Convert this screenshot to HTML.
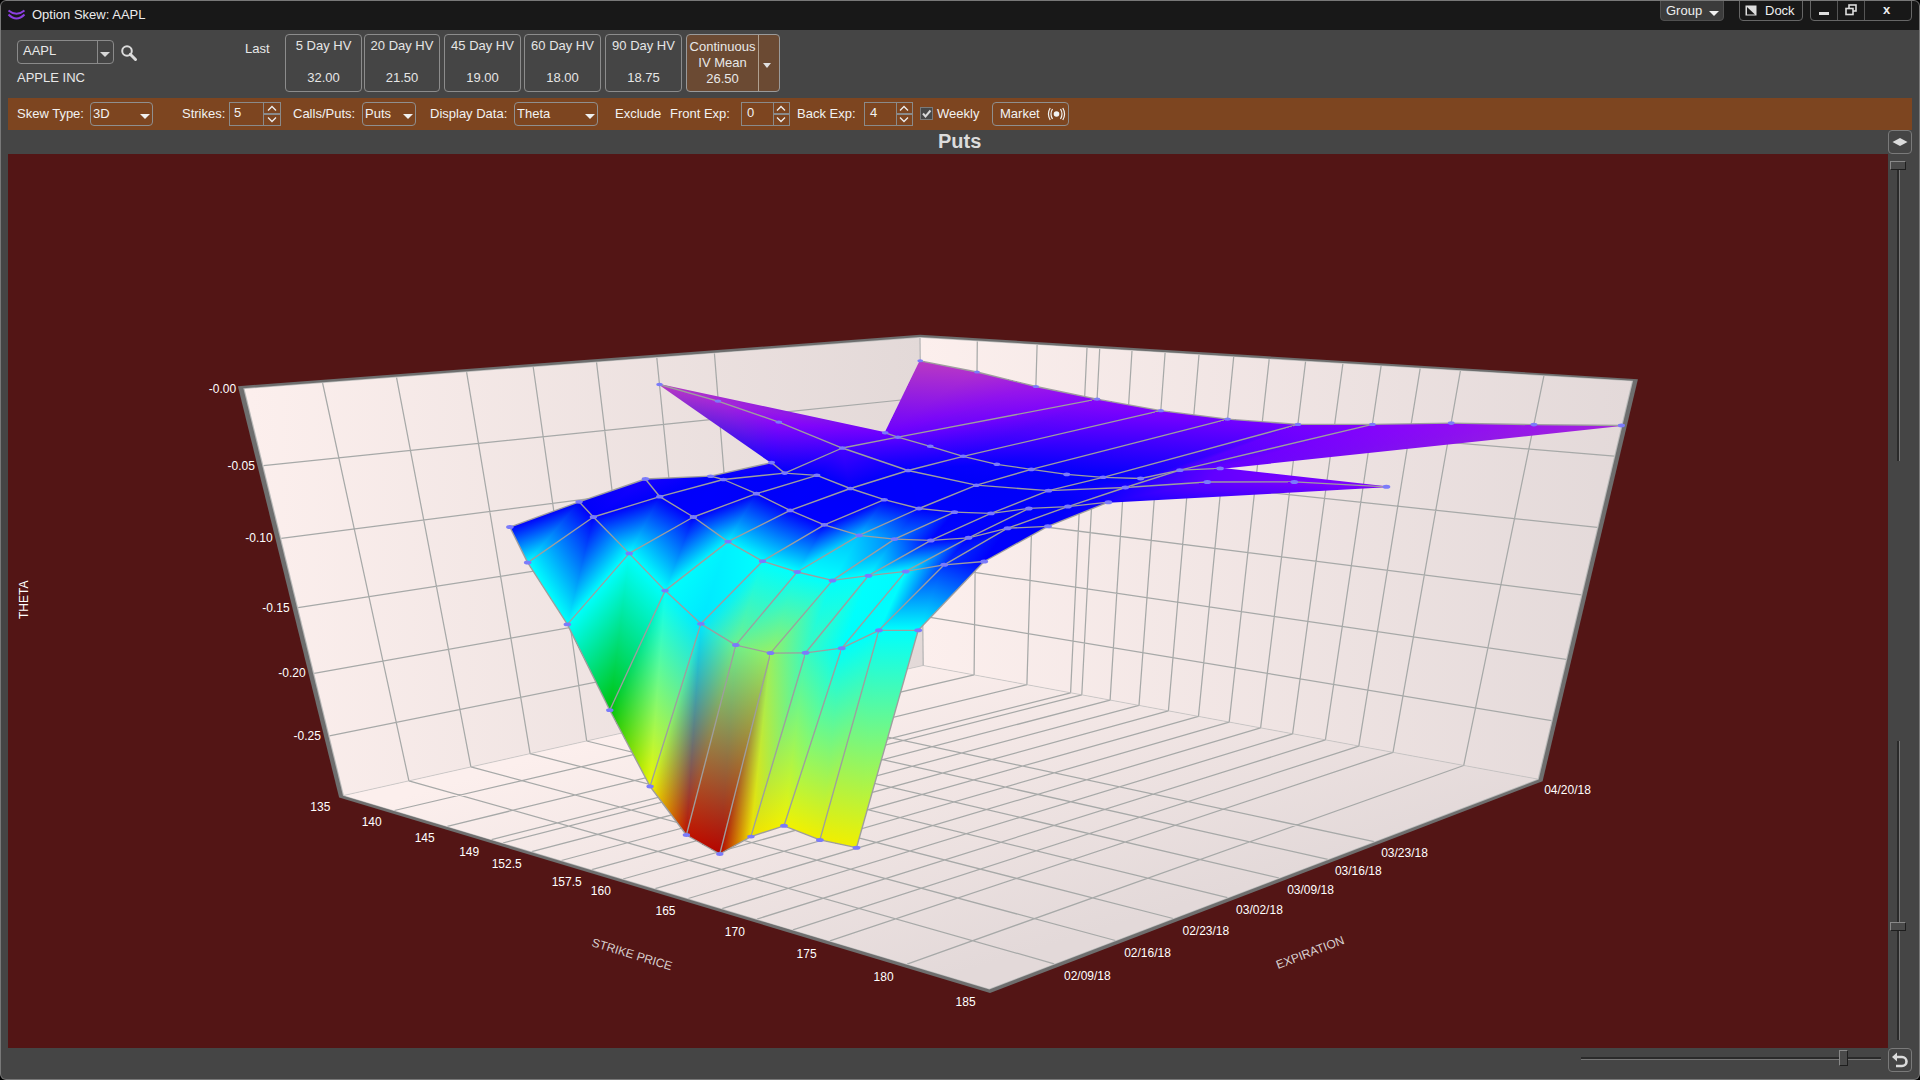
<!DOCTYPE html>
<html><head><meta charset="utf-8">
<style>
*{margin:0;padding:0;box-sizing:border-box}
html,body{width:1920px;height:1080px;overflow:hidden;background:#000}
body{font-family:"Liberation Sans",sans-serif;font-size:13px;color:#e6e6e6;position:relative}
.a{position:absolute}
.t{position:absolute;white-space:nowrap;line-height:1}
#win{position:absolute;left:0;top:0;width:1920px;height:1080px;background:#454545;border-radius:6px;overflow:hidden}
#wb{position:absolute;left:0;top:0;width:1920px;height:1080px;border:1px solid #787878;border-radius:6px}
#title{position:absolute;left:0;top:0;width:1920px;height:30px;background:#181818}
.box{position:absolute;border:1px solid #8a8a8a;border-radius:3px}
.dd{position:absolute;border:1px solid #8f8f8f;border-radius:4px}
.arr{position:absolute;width:0;height:0;border-left:5px solid transparent;border-right:5px solid transparent;border-top:6px solid #f0f0f0}
.hv{position:absolute;top:34px;height:58px;border:1px solid #8c8c8c;border-radius:4px;text-align:center}
.hv .l1{position:absolute;left:0;right:0;top:4px;line-height:13px}
.hv .l2{position:absolute;left:0;right:0;top:36px;line-height:13px}
#orange{position:absolute;left:8px;top:98px;width:1904px;height:32px;background:#7d4520}
.spin{position:absolute;top:102px;height:24px;border:1px solid #8a8a8a}
.chev{position:absolute;width:8px;height:8px;border-left:1.5px solid #eee;border-top:1.5px solid #eee}
</style></head><body>
<div id="win">
 <div id="title">
  <svg class="a" style="left:7px;top:9px" width="19" height="13" viewBox="0 0 19 13"><path d="M1.5 1.5 Q9.5 8 17.5 1.5" stroke="#8b3fe0" stroke-width="2" fill="none"/><path d="M1.5 5.5 Q9.5 13.5 17.5 5.5" stroke="#8b3fe0" stroke-width="2" fill="none"/></svg>
  <div class="t" style="left:32px;top:8px;font-size:13px;color:#ececec">Option Skew: AAPL</div>
  <div class="a" style="left:1660px;top:-3px;width:64px;height:24px;background:#3b3b3b;border:1px solid #505050;border-radius:4px"></div>
  <div class="t" style="left:1666px;top:4px;color:#eee">Group</div>
  <div class="arr" style="left:1709px;top:11px;border-left-width:5px;border-right-width:5px;border-top-width:5px"></div>
  <div class="a" style="left:1739px;top:-3px;width:64px;height:24px;border:1px solid #666;border-radius:4px"></div>
  <svg class="a" style="left:1745px;top:5px" width="12" height="11"><rect x="0.5" y="0.5" width="11" height="10" fill="#ddd"/><path d="M2 2 L10 9.5 L2 9.5 Z" fill="#181818"/></svg>
  <div class="t" style="left:1765px;top:4px;color:#eee">Dock</div>
  <div class="a" style="left:1810px;top:-3px;width:102px;height:24px;border:1px solid #666;border-radius:4px"></div>
  <div class="a" style="left:1837px;top:0;width:1px;height:20px;background:#555"></div>
  <div class="a" style="left:1864px;top:0;width:1px;height:20px;background:#555"></div>
  <div class="a" style="left:1819px;top:12px;width:10px;height:3px;background:#ddd"></div>
  <svg class="a" style="left:1845px;top:4px" width="13" height="12"><rect x="4" y="1" width="7" height="6" fill="none" stroke="#ddd" stroke-width="1.6"/><rect x="1" y="4.5" width="7" height="6" fill="#181818" stroke="#ddd" stroke-width="1.6"/></svg>
  <div class="t" style="left:1883px;top:3px;font-weight:bold;font-size:13px;color:#eee">x</div>
 </div>
 <!-- top panel -->
 <div class="box" style="left:17px;top:40px;width:97px;height:24px;border-radius:4px"></div>
 <div class="a" style="left:97px;top:41px;width:1px;height:22px;background:#8a8a8a"></div>
 <div class="t" style="left:23px;top:44px;color:#e8e8e8">AAPL</div>
 <div class="arr" style="left:100px;top:52px;border-left-width:5px;border-right-width:5px;border-top-width:5px;border-top-color:#d8d8d8"></div>
 <svg class="a" style="left:120px;top:44px" width="18" height="18"><circle cx="7" cy="7" r="4.8" fill="none" stroke="#dcdcdc" stroke-width="2"/><path d="M10.3 10.3 L15.5 15.5" stroke="#dcdcdc" stroke-width="3" stroke-linecap="round"/></svg>
 <div class="t" style="left:17px;top:71px;color:#e8e8e8">APPLE INC</div>
 <div class="t" style="left:245px;top:42px;color:#e8e8e8">Last</div>
 <div class="hv" style="left:285px;width:77px"><div class="l1">5 Day HV</div><div class="l2">32.00</div></div>
 <div class="hv" style="left:364px;width:76px"><div class="l1">20 Day HV</div><div class="l2">21.50</div></div>
 <div class="hv" style="left:444px;width:77px"><div class="l1">45 Day HV</div><div class="l2">19.00</div></div>
 <div class="hv" style="left:524px;width:77px"><div class="l1">60 Day HV</div><div class="l2">18.00</div></div>
 <div class="hv" style="left:605px;width:77px"><div class="l1">90 Day HV</div><div class="l2">18.75</div></div>
 <div class="hv" style="left:686px;width:94px;background:#6b4a33;border-color:#9a9a9a"></div>
 <div class="a" style="left:758px;top:35px;width:1px;height:56px;background:#b0a090"></div>
 <div class="t" style="left:687px;top:39px;width:71px;text-align:center;line-height:16px;color:#e8e8e8">Continuous<br>IV Mean<br>26.50</div>
 <div class="arr" style="left:763px;top:63px;border-left-width:4px;border-right-width:4px;border-top-width:5px;border-top-color:#e0e0e0"></div>
 <!-- orange bar -->
 <div id="orange"></div>
 <div class="t" style="left:17px;top:107px;color:#f2f2f2">Skew Type:</div>
 <div class="dd" style="left:90px;top:102px;width:63px;height:24px"></div>
 <div class="t" style="left:93px;top:107px;color:#f2f2f2">3D</div>
 <div class="arr" style="left:140px;top:114px;border-left-width:5px;border-right-width:5px;border-top-width:5px"></div>
 <div class="t" style="left:182px;top:107px;color:#f2f2f2">Strikes:</div>
 <div class="spin" style="left:229px;width:52px"></div>
 <div class="a" style="left:263px;top:103px;width:1px;height:22px;background:#8a8a8a"></div>
 <div class="a" style="left:264px;top:113px;width:16px;height:2px;background:#8a8a8a"></div>
 <div class="t" style="left:234px;top:106px;color:#f2f2f2">5</div>
 <svg class="a" style="left:265px;top:104px" width="14" height="20"><path d="M3 6.5 L7 2.5 L11 6.5" stroke="#eee" stroke-width="1.3" fill="none"/><path d="M3 13.5 L7 17.5 L11 13.5" stroke="#eee" stroke-width="1.3" fill="none"/></svg>
 <div class="t" style="left:293px;top:107px;color:#f2f2f2">Calls/Puts:</div>
 <div class="dd" style="left:362px;top:102px;width:54px;height:24px"></div>
 <div class="t" style="left:365px;top:107px;color:#f2f2f2">Puts</div>
 <div class="arr" style="left:403px;top:114px;border-left-width:5px;border-right-width:5px;border-top-width:5px"></div>
 <div class="t" style="left:430px;top:107px;color:#f2f2f2">Display Data:</div>
 <div class="dd" style="left:514px;top:102px;width:84px;height:24px"></div>
 <div class="t" style="left:517px;top:107px;color:#f2f2f2">Theta</div>
 <div class="arr" style="left:585px;top:114px;border-left-width:5px;border-right-width:5px;border-top-width:5px"></div>
 <div class="t" style="left:615px;top:107px;color:#f2f2f2">Exclude</div>
 <div class="t" style="left:670px;top:107px;color:#f2f2f2">Front Exp:</div>
 <div class="spin" style="left:741px;width:49px"></div>
 <div class="a" style="left:773px;top:103px;width:1px;height:22px;background:#8a8a8a"></div>
 <div class="a" style="left:774px;top:113px;width:15px;height:2px;background:#8a8a8a"></div>
 <div class="t" style="left:747px;top:106px;color:#f2f2f2">0</div>
 <svg class="a" style="left:774px;top:104px" width="14" height="20"><path d="M3 6.5 L7 2.5 L11 6.5" stroke="#eee" stroke-width="1.3" fill="none"/><path d="M3 13.5 L7 17.5 L11 13.5" stroke="#eee" stroke-width="1.3" fill="none"/></svg>
 <div class="t" style="left:797px;top:107px;color:#f2f2f2">Back Exp:</div>
 <div class="spin" style="left:864px;width:49px"></div>
 <div class="a" style="left:896px;top:103px;width:1px;height:22px;background:#8a8a8a"></div>
 <div class="a" style="left:897px;top:113px;width:15px;height:2px;background:#8a8a8a"></div>
 <div class="t" style="left:870px;top:106px;color:#f2f2f2">4</div>
 <svg class="a" style="left:897px;top:104px" width="14" height="20"><path d="M3 6.5 L7 2.5 L11 6.5" stroke="#eee" stroke-width="1.3" fill="none"/><path d="M3 13.5 L7 17.5 L11 13.5" stroke="#eee" stroke-width="1.3" fill="none"/></svg>
 <div class="a" style="left:920px;top:107px;width:13px;height:13px;background:#474747;border:1px solid #7a7a7a"></div>
 <svg class="a" style="left:921px;top:108px" width="11" height="11"><path d="M2 5.5 L4.5 8.5 L9.5 2.5" stroke="#d8d8d8" stroke-width="2" fill="none"/></svg>
 <div class="t" style="left:937px;top:107px;color:#f2f2f2">Weekly</div>
 <div class="a" style="left:992px;top:102px;width:77px;height:24px;border:1px solid #8f8f8f;border-radius:4px"></div>
 <div class="t" style="left:1000px;top:107px;color:#f2f2f2">Market</div>
 <svg class="a" style="left:1047px;top:107px" width="19" height="14"><circle cx="9.5" cy="7" r="2.8" fill="#f2f2f2"/><path d="M5.5 2 Q2.5 7 5.5 12" stroke="#f2f2f2" stroke-width="1.2" fill="none"/><path d="M3.2 1 Q-0.3 7 3.2 13" stroke="#f2f2f2" stroke-width="1.2" fill="none"/><path d="M13.5 2 Q16.5 7 13.5 12" stroke="#f2f2f2" stroke-width="1.2" fill="none"/><path d="M15.8 1 Q19.3 7 15.8 13" stroke="#f2f2f2" stroke-width="1.2" fill="none"/></svg>
 <!-- chart header -->
 <div class="t" style="left:938px;top:131px;font-size:20px;font-weight:bold;color:#dcdcdc">Puts</div>
 <div class="a" style="left:1888px;top:130px;width:24px;height:24px;border:1px solid #7a7a7a;border-radius:4px"></div>
 <svg class="a" style="left:1891px;top:137px" width="18" height="10"><path d="M1.5 5 L9 1 L16.5 5 L9 9 Z" fill="#dcdcdc"/></svg>
 <!-- right sliders -->
 <div class="a" style="left:1897px;top:168px;width:3px;height:293px;background:#2a2a2a;border-right:1px solid #777"></div>
 <div class="a" style="left:1890px;top:161px;width:16px;height:9px;background:#4a4a4a;border:1px solid #1e1e1e;border-top-color:#888;border-left-color:#888"></div>
 <div class="a" style="left:1897px;top:741px;width:3px;height:299px;background:#2a2a2a;border-right:1px solid #777"></div>
 <div class="a" style="left:1890px;top:922px;width:16px;height:9px;background:#4a4a4a;border:1px solid #1e1e1e;border-top-color:#888;border-left-color:#888"></div>
 <div class="a" style="left:1581px;top:1057px;width:300px;height:3px;background:#2a2a2a;border-bottom:1px solid #777"></div>
 <div class="a" style="left:1839px;top:1050px;width:9px;height:16px;background:#4a4a4a;border:1px solid #1e1e1e;border-top-color:#888;border-left-color:#888"></div>
 <div class="a" style="left:1888px;top:1048px;width:24px;height:24px;border:1px solid #7a7a7a;border-radius:4px"></div>
 <svg class="a" style="left:1891px;top:1051px" width="18" height="18"><path d="M5 6 H11 A4.5 4.5 0 0 1 11 15 H5" stroke="#dcdcdc" stroke-width="2.6" fill="none"/><path d="M1 6 L6 1.5 L6 10.5 Z" fill="#dcdcdc"/></svg>
<svg class="a" style="left:0;top:0" width="1920" height="1080">
<defs>
<clipPath id="cc"><rect x="8" y="154" width="1880" height="894"/></clipPath>
<linearGradient id="gl" gradientUnits="userSpaceOnUse" x1="250" y1="500" x2="922" y2="500"><stop offset="0" stop-color="#fcefed"/><stop offset="1" stop-color="#e3d9d8"/></linearGradient>
<linearGradient id="gr" gradientUnits="userSpaceOnUse" x1="922" y1="500" x2="1632" y2="500"><stop offset="0" stop-color="#fcefed"/><stop offset="1" stop-color="#e3d9d9"/></linearGradient>
<linearGradient id="gf" gradientUnits="userSpaceOnUse" x1="254" y1="842" x2="350" y2="1158"><stop offset="0" stop-color="#fcefed"/><stop offset="1" stop-color="#e3d9d9"/></linearGradient>
</defs>
<rect x="8" y="154" width="1880" height="894" fill="#531515"/>
<g clip-path="url(#cc)">
<polygon points="237.9,386.2 920.1,334.7 1637.9,379.2 1542.6,781.2 990,993 339.1,797.5" fill="#6e6e6e"/>
<polygon points="243.3,388.3 920,337.1 1633.1,380.8 1538.7,779.6 989.4,989.5 343,795.8" fill="#b9bab9"/>
<polygon points="244.6,388.9 920,337.7 923.2,665.5 344,795.4" fill="url(#gl)"/>
<polygon points="920,337.7 1631.9,381.3 1537.7,779.1 923.2,665.5" fill="url(#gr)"/>
<polygon points="344,795.4 923.2,665.5 1537.7,779.1 989.2,988.7" fill="url(#gf)"/>
<clipPath id="wc"><polygon points="244.6,388.9 920,337.7 1631.9,381.3 1537.7,779.1 989.2,988.7 344,795.4"/></clipPath>
<path d="M322.6 383L408.9 780.8M408.9 780.8L1054.2 963.8M396.5 377.4L470.9 766.9M470.9 766.9L1115.4 940.5M466.6 372.1L530.1 753.7M530.1 753.7L1173.1 918.5M533.2 367L586.7 741M586.7 741L1227.5 897.6M596.5 362.2L640.9 728.8M640.9 728.8L1279 878M656.8 357.7L692.9 717.2M692.9 717.2L1327.8 859.3M714.4 353.3L742.7 706M742.7 706L1374.1 841.6M263.4 465.6L920.6 398M920.6 398L1614.2 456.2M281.2 538.4L921.2 455.8M921.2 455.8L1597.3 527.3M298.1 607.6L921.7 511.3M921.7 511.3L1581.3 594.9M314.1 673.3L922.2 564.7M922.2 564.7L1566.1 659.3M329.4 735.8L922.7 616.1M922.7 616.1L1551.6 720.6M977.3 341.2L974.1 674.9M974.1 674.9L394.4 810.5M1037.1 344.9L1026.9 684.7M1026.9 684.7L447.3 826.3M1087 347.9L1070.6 692.8M1070.6 692.8L491.5 839.6M1099.7 348.7L1081.8 694.8M1081.8 694.8L502.9 843M1132 350.7L1110.1 700.1M1110.1 700.1L531.7 851.6M1165.1 352.7L1139 705.4M1139 705.4L561.4 860.5M1199 354.8L1168.4 710.9M1168.4 710.9L591.8 869.6M1233.7 356.9L1198.5 716.4M1198.5 716.4L623.1 879M1269.2 359.1L1229.2 722.1M1229.2 722.1L655.2 888.6M1305.6 361.3L1260.6 727.9M1260.6 727.9L688.2 898.5M1342.9 363.6L1292.6 733.8M1292.6 733.8L722.1 908.6M1381.1 365.9L1325.4 739.9M1325.4 739.9L757 919.1M1420.2 368.3L1358.8 746.1M1358.8 746.1L792.9 929.9M1460.4 370.8L1393 752.4M1393 752.4L829.9 940.9M1543.9 375.9L1463.7 765.5M1463.7 765.5L907.1 964.1" stroke="#a7a9a8" stroke-width="1.25" fill="none" clip-path="url(#wc)"/>
<path d="M920 337.7L923.2 665.5" stroke="#b4b4b4" stroke-width="1.2"/>
<path d="M344 795.4L923.2 665.5L1537.7 779.1" stroke="#b8b8b8" stroke-width="1" fill="none" opacity="0.6"/>
<defs><linearGradient id="q1" gradientUnits="userSpaceOnUse" x1="509.9" y1="527.1" x2="523.5" y2="564.2"><stop offset="0" stop-color="rgb(0,0,0)"/><stop offset="1" stop-color="rgb(0,255,0)"/></linearGradient><linearGradient id="q2" gradientUnits="userSpaceOnUse" x1="579.1" y1="501.8" x2="556.7" y2="571.9"><stop offset="0" stop-color="rgb(0,0,248)"/><stop offset="1" stop-color="rgb(0,0,255)"/></linearGradient><linearGradient id="q3" gradientUnits="userSpaceOnUse" x1="593.4" y1="517" x2="535.9" y2="571.3"><stop offset="0" stop-color="rgb(0,0,0)"/><stop offset="1" stop-color="rgb(0,255,0)"/></linearGradient><linearGradient id="q4" gradientUnits="userSpaceOnUse" x1="579.1" y1="501.8" x2="593" y2="536.2"><stop offset="0" stop-color="rgb(0,0,248)"/><stop offset="1" stop-color="rgb(0,0,255)"/></linearGradient><linearGradient id="q5" gradientUnits="userSpaceOnUse" x1="593.4" y1="517" x2="526.1" y2="560.3"><stop offset="0" stop-color="rgb(0,0,0)"/><stop offset="1" stop-color="rgb(0,255,0)"/></linearGradient><linearGradient id="q6" gradientUnits="userSpaceOnUse" x1="567.4" y1="624.4" x2="511.6" y2="600.9"><stop offset="0" stop-color="rgb(0,0,250)"/><stop offset="1" stop-color="rgb(0,0,255)"/></linearGradient><linearGradient id="q7" gradientUnits="userSpaceOnUse" x1="593.4" y1="517" x2="631.8" y2="550.4"><stop offset="0" stop-color="rgb(0,0,0)"/><stop offset="1" stop-color="rgb(0,255,0)"/></linearGradient><linearGradient id="q8" gradientUnits="userSpaceOnUse" x1="567.4" y1="624.4" x2="621.2" y2="630"><stop offset="0" stop-color="rgb(0,0,250)"/><stop offset="1" stop-color="rgb(0,0,255)"/></linearGradient><linearGradient id="q9" gradientUnits="userSpaceOnUse" x1="609.8" y1="710.2" x2="543.2" y2="652.2"><stop offset="0" stop-color="rgb(0,195,0)"/><stop offset="1" stop-color="rgb(0,255,0)"/></linearGradient><linearGradient id="q10" gradientUnits="userSpaceOnUse" x1="609.8" y1="710.2" x2="542.5" y2="649.3"><stop offset="0" stop-color="rgb(0,0,11)"/><stop offset="1" stop-color="rgb(0,0,255)"/></linearGradient><linearGradient id="q11" gradientUnits="userSpaceOnUse" x1="609.8" y1="710.2" x2="698.2" y2="624.8"><stop offset="0" stop-color="rgb(0,195,0)"/><stop offset="1" stop-color="rgb(0,255,0)"/></linearGradient><linearGradient id="q12" gradientUnits="userSpaceOnUse" x1="609.8" y1="710.2" x2="697.7" y2="620.8"><stop offset="0" stop-color="rgb(0,0,11)"/><stop offset="1" stop-color="rgb(0,0,255)"/></linearGradient><linearGradient id="q13" gradientUnits="userSpaceOnUse" x1="609.8" y1="710.2" x2="672" y2="739"><stop offset="0" stop-color="rgb(0,0,0)"/><stop offset="1" stop-color="rgb(238,0,0)"/></linearGradient><linearGradient id="q14" gradientUnits="userSpaceOnUse" x1="609.8" y1="710.2" x2="661.4" y2="711.7"><stop offset="0" stop-color="rgb(0,195,0)"/><stop offset="1" stop-color="rgb(0,255,0)"/></linearGradient><linearGradient id="q15" gradientUnits="userSpaceOnUse" x1="650.1" y1="786.5" x2="747.8" y2="727.3"><stop offset="0" stop-color="rgb(0,0,0)"/><stop offset="1" stop-color="rgb(0,0,252)"/></linearGradient><linearGradient id="q16" gradientUnits="userSpaceOnUse" x1="700.9" y1="623.8" x2="596.2" y2="736.4"><stop offset="0" stop-color="rgb(0,0,0)"/><stop offset="1" stop-color="rgb(238,0,0)"/></linearGradient><linearGradient id="q17" gradientUnits="userSpaceOnUse" x1="700.9" y1="623.8" x2="660.6" y2="616.8"><stop offset="0" stop-color="rgb(0,232,0)"/><stop offset="1" stop-color="rgb(0,255,0)"/></linearGradient><linearGradient id="q18" gradientUnits="userSpaceOnUse" x1="650.1" y1="786.5" x2="756.5" y2="678.9"><stop offset="0" stop-color="rgb(0,0,0)"/><stop offset="1" stop-color="rgb(0,0,255)"/></linearGradient><linearGradient id="q19" gradientUnits="userSpaceOnUse" x1="700.9" y1="623.8" x2="606.6" y2="655"><stop offset="0" stop-color="rgb(0,0,0)"/><stop offset="1" stop-color="rgb(238,0,0)"/></linearGradient><linearGradient id="q20" gradientUnits="userSpaceOnUse" x1="686.4" y1="835" x2="639.8" y2="821.2"><stop offset="0" stop-color="rgb(0,20,0)"/><stop offset="1" stop-color="rgb(0,244,0)"/></linearGradient><linearGradient id="q21" gradientUnits="userSpaceOnUse" x1="650.1" y1="786.5" x2="760.6" y2="703.6"><stop offset="0" stop-color="rgb(0,0,0)"/><stop offset="1" stop-color="rgb(0,0,255)"/></linearGradient><linearGradient id="q22" gradientUnits="userSpaceOnUse" x1="700.9" y1="623.8" x2="765.8" y2="652"><stop offset="0" stop-color="rgb(0,0,0)"/><stop offset="1" stop-color="rgb(192,0,0)"/></linearGradient><linearGradient id="q23" gradientUnits="userSpaceOnUse" x1="686.4" y1="835" x2="800.8" y2="700.3"><stop offset="0" stop-color="rgb(0,20,0)"/><stop offset="1" stop-color="rgb(0,240,0)"/></linearGradient><linearGradient id="q24" gradientUnits="userSpaceOnUse" x1="686.4" y1="835" x2="607.3" y2="790.6"><stop offset="0" stop-color="rgb(0,0,0)"/><stop offset="1" stop-color="rgb(0,0,255)"/></linearGradient><linearGradient id="q25" gradientUnits="userSpaceOnUse" x1="735.8" y1="645.1" x2="618.5" y2="707.7"><stop offset="0" stop-color="rgb(110,0,0)"/><stop offset="1" stop-color="rgb(192,0,0)"/></linearGradient><linearGradient id="q26" gradientUnits="userSpaceOnUse" x1="719.8" y1="854" x2="750" y2="647.1"><stop offset="0" stop-color="rgb(0,4,0)"/><stop offset="1" stop-color="rgb(0,240,0)"/></linearGradient><linearGradient id="q27" gradientUnits="userSpaceOnUse" x1="686.4" y1="835" x2="780.2" y2="670.4"><stop offset="0" stop-color="rgb(0,0,0)"/><stop offset="1" stop-color="rgb(0,0,140)"/></linearGradient><linearGradient id="q28" gradientUnits="userSpaceOnUse" x1="735.8" y1="645.1" x2="792.7" y2="667.2"><stop offset="0" stop-color="rgb(110,0,0)"/><stop offset="1" stop-color="rgb(179,0,0)"/></linearGradient><linearGradient id="q29" gradientUnits="userSpaceOnUse" x1="719.8" y1="854" x2="766.7" y2="652.2"><stop offset="0" stop-color="rgb(0,4,0)"/><stop offset="1" stop-color="rgb(0,240,0)"/></linearGradient><linearGradient id="q30" gradientUnits="userSpaceOnUse" x1="719.8" y1="854" x2="629.4" y2="785.4"><stop offset="0" stop-color="rgb(0,0,0)"/><stop offset="1" stop-color="rgb(0,0,140)"/></linearGradient><linearGradient id="q31" gradientUnits="userSpaceOnUse" x1="770.5" y1="653.1" x2="805" y2="663.9"><stop offset="0" stop-color="rgb(150,0,0)"/><stop offset="1" stop-color="rgb(240,0,0)"/></linearGradient><linearGradient id="q32" gradientUnits="userSpaceOnUse" x1="719.8" y1="854" x2="750.9" y2="857"><stop offset="0" stop-color="rgb(0,4,0)"/><stop offset="1" stop-color="rgb(0,240,0)"/></linearGradient><linearGradient id="q33" gradientUnits="userSpaceOnUse" x1="719.8" y1="854" x2="646.1" y2="723.1"><stop offset="0" stop-color="rgb(0,0,0)"/><stop offset="1" stop-color="rgb(0,0,100)"/></linearGradient><linearGradient id="q34" gradientUnits="userSpaceOnUse" x1="805.6" y1="652.8" x2="735.8" y2="658.7"><stop offset="0" stop-color="rgb(60,0,0)"/><stop offset="1" stop-color="rgb(240,0,0)"/></linearGradient><linearGradient id="q35" gradientUnits="userSpaceOnUse" x1="750.9" y1="836.6" x2="836" y2="821.2"><stop offset="0" stop-color="rgb(0,225,0)"/><stop offset="1" stop-color="rgb(0,250,0)"/></linearGradient><linearGradient id="q36" gradientUnits="userSpaceOnUse" x1="750.9" y1="836.6" x2="824.2" y2="828.8"><stop offset="0" stop-color="rgb(0,0,0)"/><stop offset="1" stop-color="rgb(0,0,190)"/></linearGradient><linearGradient id="q37" gradientUnits="userSpaceOnUse" x1="805.6" y1="652.8" x2="859.3" y2="797.9"><stop offset="0" stop-color="rgb(60,0,0)"/><stop offset="1" stop-color="rgb(242,0,0)"/></linearGradient><linearGradient id="q38" gradientUnits="userSpaceOnUse" x1="750.9" y1="836.6" x2="798.9" y2="838.3"><stop offset="0" stop-color="rgb(0,225,0)"/><stop offset="1" stop-color="rgb(0,250,0)"/></linearGradient><linearGradient id="q39" gradientUnits="userSpaceOnUse" x1="750.9" y1="836.6" x2="702.2" y2="686.3"><stop offset="0" stop-color="rgb(0,0,0)"/><stop offset="1" stop-color="rgb(0,0,190)"/></linearGradient><linearGradient id="q40" gradientUnits="userSpaceOnUse" x1="841.7" y1="648.2" x2="722.3" y2="714.2"><stop offset="0" stop-color="rgb(0,0,0)"/><stop offset="1" stop-color="rgb(242,0,0)"/></linearGradient><linearGradient id="q41" gradientUnits="userSpaceOnUse" x1="784" y1="825.8" x2="876.2" y2="805.7"><stop offset="0" stop-color="rgb(0,242,0)"/><stop offset="1" stop-color="rgb(0,255,0)"/></linearGradient><linearGradient id="q42" gradientUnits="userSpaceOnUse" x1="784" y1="825.8" x2="904.4" y2="755.8"><stop offset="0" stop-color="rgb(0,0,0)"/><stop offset="1" stop-color="rgb(0,0,250)"/></linearGradient><linearGradient id="q43" gradientUnits="userSpaceOnUse" x1="841.7" y1="648.2" x2="772.6" y2="821.3"><stop offset="0" stop-color="rgb(0,0,0)"/><stop offset="1" stop-color="rgb(242,0,0)"/></linearGradient><linearGradient id="q44" gradientUnits="userSpaceOnUse" x1="819.9" y1="839.9" x2="736.1" y2="725.8"><stop offset="0" stop-color="rgb(0,238,0)"/><stop offset="1" stop-color="rgb(0,255,0)"/></linearGradient><linearGradient id="q45" gradientUnits="userSpaceOnUse" x1="784" y1="825.8" x2="851.8" y2="652.1"><stop offset="0" stop-color="rgb(0,0,0)"/><stop offset="1" stop-color="rgb(0,0,250)"/></linearGradient><linearGradient id="q46" gradientUnits="userSpaceOnUse" x1="878.9" y1="630.3" x2="949.6" y2="777.7"><stop offset="0" stop-color="rgb(0,0,0)"/><stop offset="1" stop-color="rgb(241,0,0)"/></linearGradient><linearGradient id="q47" gradientUnits="userSpaceOnUse" x1="819.9" y1="839.9" x2="749.3" y2="692.5"><stop offset="0" stop-color="rgb(0,238,0)"/><stop offset="1" stop-color="rgb(0,255,0)"/></linearGradient><linearGradient id="q48" gradientUnits="userSpaceOnUse" x1="819.9" y1="839.9" x2="752" y2="686.5"><stop offset="0" stop-color="rgb(0,0,0)"/><stop offset="1" stop-color="rgb(0,0,252)"/></linearGradient><linearGradient id="q49" gradientUnits="userSpaceOnUse" x1="878.9" y1="630.3" x2="834.5" y2="843.1"><stop offset="0" stop-color="rgb(0,0,0)"/><stop offset="1" stop-color="rgb(241,0,0)"/></linearGradient><linearGradient id="q50" gradientUnits="userSpaceOnUse" x1="819.9" y1="839.9" x2="946.1" y2="685"><stop offset="0" stop-color="rgb(0,238,0)"/><stop offset="1" stop-color="rgb(0,255,0)"/></linearGradient><linearGradient id="q51" gradientUnits="userSpaceOnUse" x1="819.9" y1="839.9" x2="865.1" y2="627.4"><stop offset="0" stop-color="rgb(0,0,0)"/><stop offset="1" stop-color="rgb(0,0,252)"/></linearGradient><linearGradient id="q52" gradientUnits="userSpaceOnUse" x1="918.2" y1="630.3" x2="918.6" y2="847.5"><stop offset="0" stop-color="rgb(0,0,0)"/><stop offset="1" stop-color="rgb(241,0,0)"/></linearGradient><linearGradient id="q53" gradientUnits="userSpaceOnUse" x1="856.5" y1="847.7" x2="856.1" y2="630.4"><stop offset="0" stop-color="rgb(0,240,0)"/><stop offset="1" stop-color="rgb(0,255,0)"/></linearGradient><linearGradient id="q54" gradientUnits="userSpaceOnUse" x1="856.5" y1="847.7" x2="858.6" y2="629.7"><stop offset="0" stop-color="rgb(0,0,0)"/><stop offset="1" stop-color="rgb(0,0,253)"/></linearGradient><linearGradient id="q55" gradientUnits="userSpaceOnUse" x1="579.1" y1="501.8" x2="625.6" y2="457.9"><stop offset="0" stop-color="rgb(0,0,0)"/><stop offset="1" stop-color="rgb(22,0,0)"/></linearGradient><linearGradient id="q56" gradientUnits="userSpaceOnUse" x1="579.1" y1="501.8" x2="610.6" y2="525.4"><stop offset="0" stop-color="rgb(0,0,248)"/><stop offset="1" stop-color="rgb(0,0,255)"/></linearGradient><linearGradient id="q57" gradientUnits="userSpaceOnUse" x1="593.4" y1="517" x2="587.2" y2="496.7"><stop offset="0" stop-color="rgb(0,0,0)"/><stop offset="1" stop-color="rgb(22,0,0)"/></linearGradient><linearGradient id="q58" gradientUnits="userSpaceOnUse" x1="659.8" y1="496.7" x2="650.1" y2="476.7"><stop offset="0" stop-color="rgb(0,0,249)"/><stop offset="1" stop-color="rgb(0,0,255)"/></linearGradient><linearGradient id="q59" gradientUnits="userSpaceOnUse" x1="593.4" y1="517" x2="606.6" y2="560.3"><stop offset="0" stop-color="rgb(0,0,0)"/><stop offset="1" stop-color="rgb(0,255,0)"/></linearGradient><linearGradient id="q60" gradientUnits="userSpaceOnUse" x1="659.8" y1="496.7" x2="653.2" y2="556"><stop offset="0" stop-color="rgb(0,0,249)"/><stop offset="1" stop-color="rgb(0,0,255)"/></linearGradient><linearGradient id="q61" gradientUnits="userSpaceOnUse" x1="693.4" y1="517" x2="660.3" y2="572.1"><stop offset="0" stop-color="rgb(0,0,0)"/><stop offset="1" stop-color="rgb(0,255,0)"/></linearGradient><linearGradient id="q62" gradientUnits="userSpaceOnUse" x1="659.8" y1="496.7" x2="673.2" y2="539.6"><stop offset="0" stop-color="rgb(0,0,249)"/><stop offset="1" stop-color="rgb(0,0,255)"/></linearGradient><linearGradient id="q63" gradientUnits="userSpaceOnUse" x1="693.4" y1="517" x2="642" y2="566.7"><stop offset="0" stop-color="rgb(0,0,0)"/><stop offset="1" stop-color="rgb(0,255,0)"/></linearGradient><linearGradient id="q64" gradientUnits="userSpaceOnUse" x1="665.1" y1="590.6" x2="621.4" y2="569.8"><stop offset="0" stop-color="rgb(0,0,252)"/><stop offset="1" stop-color="rgb(0,0,255)"/></linearGradient><linearGradient id="q65" gradientUnits="userSpaceOnUse" x1="693.4" y1="517" x2="718.6" y2="551"><stop offset="0" stop-color="rgb(0,0,0)"/><stop offset="1" stop-color="rgb(0,255,0)"/></linearGradient><linearGradient id="q66" gradientUnits="userSpaceOnUse" x1="665.1" y1="590.6" x2="708.9" y2="604"><stop offset="0" stop-color="rgb(0,0,252)"/><stop offset="1" stop-color="rgb(0,0,255)"/></linearGradient><linearGradient id="q67" gradientUnits="userSpaceOnUse" x1="700.9" y1="623.8" x2="660.6" y2="597.6"><stop offset="0" stop-color="rgb(0,232,0)"/><stop offset="1" stop-color="rgb(0,255,0)"/></linearGradient><linearGradient id="q68" gradientUnits="userSpaceOnUse" x1="665.1" y1="590.6" x2="707.2" y2="604.5"><stop offset="0" stop-color="rgb(0,0,252)"/><stop offset="1" stop-color="rgb(0,0,255)"/></linearGradient><linearGradient id="q69" gradientUnits="userSpaceOnUse" x1="700.9" y1="623.8" x2="763.9" y2="622.4"><stop offset="0" stop-color="rgb(0,232,0)"/><stop offset="1" stop-color="rgb(0,255,0)"/></linearGradient><linearGradient id="q70" gradientUnits="userSpaceOnUse" x1="700.9" y1="623.8" x2="729.2" y2="651.8"><stop offset="0" stop-color="rgb(0,0,0)"/><stop offset="1" stop-color="rgb(110,0,0)"/></linearGradient><linearGradient id="q71" gradientUnits="userSpaceOnUse" x1="700.9" y1="623.8" x2="774.9" y2="600.5"><stop offset="0" stop-color="rgb(0,232,0)"/><stop offset="1" stop-color="rgb(0,255,0)"/></linearGradient><linearGradient id="q72" gradientUnits="userSpaceOnUse" x1="735.8" y1="645.1" x2="707.4" y2="617.2"><stop offset="0" stop-color="rgb(0,0,140)"/><stop offset="1" stop-color="rgb(0,0,255)"/></linearGradient><linearGradient id="q73" gradientUnits="userSpaceOnUse" x1="797.2" y1="572" x2="771" y2="656"><stop offset="0" stop-color="rgb(0,0,0)"/><stop offset="1" stop-color="rgb(110,0,0)"/></linearGradient><linearGradient id="q74" gradientUnits="userSpaceOnUse" x1="735.8" y1="645.1" x2="762" y2="561.1"><stop offset="0" stop-color="rgb(0,240,0)"/><stop offset="1" stop-color="rgb(0,255,0)"/></linearGradient><linearGradient id="q75" gradientUnits="userSpaceOnUse" x1="735.8" y1="645.1" x2="761.2" y2="560.8"><stop offset="0" stop-color="rgb(0,0,140)"/><stop offset="1" stop-color="rgb(0,0,254)"/></linearGradient><linearGradient id="q76" gradientUnits="userSpaceOnUse" x1="797.2" y1="572" x2="818.5" y2="637.5"><stop offset="0" stop-color="rgb(0,0,0)"/><stop offset="1" stop-color="rgb(150,0,0)"/></linearGradient><linearGradient id="q77" gradientUnits="userSpaceOnUse" x1="735.8" y1="645.1" x2="755.1" y2="562.2"><stop offset="0" stop-color="rgb(0,240,0)"/><stop offset="1" stop-color="rgb(0,255,0)"/></linearGradient><linearGradient id="q78" gradientUnits="userSpaceOnUse" x1="770.5" y1="653.1" x2="749.7" y2="586.9"><stop offset="0" stop-color="rgb(0,0,100)"/><stop offset="1" stop-color="rgb(0,0,254)"/></linearGradient><linearGradient id="q79" gradientUnits="userSpaceOnUse" x1="832.5" y1="580.4" x2="812.9" y2="663.2"><stop offset="0" stop-color="rgb(0,0,0)"/><stop offset="1" stop-color="rgb(150,0,0)"/></linearGradient><linearGradient id="q80" gradientUnits="userSpaceOnUse" x1="770.5" y1="653.1" x2="790" y2="570.3"><stop offset="0" stop-color="rgb(0,240,0)"/><stop offset="1" stop-color="rgb(0,255,0)"/></linearGradient><linearGradient id="q81" gradientUnits="userSpaceOnUse" x1="770.5" y1="653.1" x2="789.8" y2="570.3"><stop offset="0" stop-color="rgb(0,0,100)"/><stop offset="1" stop-color="rgb(0,0,254)"/></linearGradient><linearGradient id="q82" gradientUnits="userSpaceOnUse" x1="832.5" y1="580.4" x2="774.2" y2="577.5"><stop offset="0" stop-color="rgb(0,0,0)"/><stop offset="1" stop-color="rgb(150,0,0)"/></linearGradient><linearGradient id="q83" gradientUnits="userSpaceOnUse" x1="770.5" y1="653.1" x2="822.2" y2="659.8"><stop offset="0" stop-color="rgb(0,240,0)"/><stop offset="1" stop-color="rgb(0,255,0)"/></linearGradient><linearGradient id="q84" gradientUnits="userSpaceOnUse" x1="770.5" y1="653.1" x2="830.4" y2="654.8"><stop offset="0" stop-color="rgb(0,0,100)"/><stop offset="1" stop-color="rgb(0,0,254)"/></linearGradient><linearGradient id="q85" gradientUnits="userSpaceOnUse" x1="868.4" y1="575.7" x2="877.2" y2="643.5"><stop offset="0" stop-color="rgb(0,0,0)"/><stop offset="1" stop-color="rgb(60,0,0)"/></linearGradient><linearGradient id="q86" gradientUnits="userSpaceOnUse" x1="805.6" y1="652.8" x2="796.7" y2="585"><stop offset="0" stop-color="rgb(0,250,0)"/><stop offset="1" stop-color="rgb(0,255,0)"/></linearGradient><linearGradient id="q87" gradientUnits="userSpaceOnUse" x1="805.6" y1="652.8" x2="798.2" y2="583.1"><stop offset="0" stop-color="rgb(0,0,190)"/><stop offset="1" stop-color="rgb(0,0,254)"/></linearGradient><linearGradient id="q88" gradientUnits="userSpaceOnUse" x1="841.7" y1="648.2" x2="811.4" y2="637"><stop offset="0" stop-color="rgb(0,0,0)"/><stop offset="1" stop-color="rgb(60,0,0)"/></linearGradient><linearGradient id="q89" gradientUnits="userSpaceOnUse" x1="805.6" y1="652.8" x2="835.9" y2="664"><stop offset="0" stop-color="rgb(0,250,0)"/><stop offset="1" stop-color="rgb(0,255,0)"/></linearGradient><linearGradient id="q90" gradientUnits="userSpaceOnUse" x1="805.6" y1="652.8" x2="838.8" y2="664"><stop offset="0" stop-color="rgb(0,0,190)"/><stop offset="1" stop-color="rgb(0,0,254)"/></linearGradient><linearGradient id="q91" gradientUnits="userSpaceOnUse" x1="905.6" y1="571.4" x2="874.2" y2="559.9"><stop offset="0" stop-color="rgb(0,250,0)"/><stop offset="1" stop-color="rgb(0,255,0)"/></linearGradient><linearGradient id="q92" gradientUnits="userSpaceOnUse" x1="841.7" y1="648.2" x2="854.1" y2="563.9"><stop offset="0" stop-color="rgb(0,0,250)"/><stop offset="1" stop-color="rgb(0,0,255)"/></linearGradient><linearGradient id="q93" gradientUnits="userSpaceOnUse" x1="905.6" y1="571.4" x2="923.6" y2="608.9"><stop offset="0" stop-color="rgb(0,250,0)"/><stop offset="1" stop-color="rgb(0,255,0)"/></linearGradient><linearGradient id="q94" gradientUnits="userSpaceOnUse" x1="841.7" y1="648.2" x2="916" y2="583.4"><stop offset="0" stop-color="rgb(0,0,250)"/><stop offset="1" stop-color="rgb(0,0,255)"/></linearGradient><linearGradient id="q95" gradientUnits="userSpaceOnUse" x1="944.2" y1="564.8" x2="913.5" y2="551.4"><stop offset="0" stop-color="rgb(0,50,0)"/><stop offset="1" stop-color="rgb(0,255,0)"/></linearGradient><linearGradient id="q96" gradientUnits="userSpaceOnUse" x1="878.9" y1="630.3" x2="869.9" y2="577.6"><stop offset="0" stop-color="rgb(0,0,252)"/><stop offset="1" stop-color="rgb(0,0,255)"/></linearGradient><linearGradient id="q97" gradientUnits="userSpaceOnUse" x1="944.2" y1="564.8" x2="944.3" y2="630.2"><stop offset="0" stop-color="rgb(0,50,0)"/><stop offset="1" stop-color="rgb(0,255,0)"/></linearGradient><linearGradient id="q98" gradientUnits="userSpaceOnUse" x1="878.9" y1="630.3" x2="913.8" y2="551.4"><stop offset="0" stop-color="rgb(0,0,252)"/><stop offset="1" stop-color="rgb(0,0,255)"/></linearGradient><linearGradient id="q99" gradientUnits="userSpaceOnUse" x1="984.2" y1="561.5" x2="953.5" y2="643.5"><stop offset="0" stop-color="rgb(0,0,0)"/><stop offset="1" stop-color="rgb(0,255,0)"/></linearGradient><linearGradient id="q100" gradientUnits="userSpaceOnUse" x1="918.2" y1="630.3" x2="896.3" y2="602.3"><stop offset="0" stop-color="rgb(0,0,253)"/><stop offset="1" stop-color="rgb(0,0,255)"/></linearGradient><linearGradient id="q101" gradientUnits="userSpaceOnUse" x1="659.8" y1="496.7" x2="651.6" y2="476.5"><stop offset="0" stop-color="rgb(0,0,0)"/><stop offset="1" stop-color="rgb(22,0,0)"/></linearGradient><linearGradient id="q102" gradientUnits="userSpaceOnUse" x1="659.8" y1="496.7" x2="656.2" y2="477"><stop offset="0" stop-color="rgb(0,0,249)"/><stop offset="1" stop-color="rgb(0,0,255)"/></linearGradient><linearGradient id="q103" gradientUnits="userSpaceOnUse" x1="659.8" y1="496.7" x2="658.7" y2="479.5"><stop offset="0" stop-color="rgb(0,0,249)"/><stop offset="1" stop-color="rgb(0,0,252)"/></linearGradient><linearGradient id="q104" gradientUnits="userSpaceOnUse" x1="659.8" y1="496.7" x2="680.2" y2="526.2"><stop offset="0" stop-color="rgb(0,0,249)"/><stop offset="1" stop-color="rgb(0,0,253)"/></linearGradient><linearGradient id="q105" gradientUnits="userSpaceOnUse" x1="756.4" y1="493.7" x2="697.5" y2="486"><stop offset="0" stop-color="rgb(0,0,249)"/><stop offset="1" stop-color="rgb(0,0,253)"/></linearGradient><linearGradient id="q106" gradientUnits="userSpaceOnUse" x1="693.4" y1="517" x2="705.6" y2="549.8"><stop offset="0" stop-color="rgb(0,0,0)"/><stop offset="1" stop-color="rgb(0,243,0)"/></linearGradient><linearGradient id="q107" gradientUnits="userSpaceOnUse" x1="756.4" y1="493.7" x2="748.5" y2="544.7"><stop offset="0" stop-color="rgb(0,0,249)"/><stop offset="1" stop-color="rgb(0,0,255)"/></linearGradient><linearGradient id="q108" gradientUnits="userSpaceOnUse" x1="790.1" y1="510.4" x2="765.4" y2="560.2"><stop offset="0" stop-color="rgb(0,0,0)"/><stop offset="1" stop-color="rgb(0,243,0)"/></linearGradient><linearGradient id="q109" gradientUnits="userSpaceOnUse" x1="756.4" y1="493.7" x2="764.3" y2="534.6"><stop offset="0" stop-color="rgb(0,0,249)"/><stop offset="1" stop-color="rgb(0,0,255)"/></linearGradient><linearGradient id="q110" gradientUnits="userSpaceOnUse" x1="790.1" y1="510.4" x2="765.2" y2="562.5"><stop offset="0" stop-color="rgb(0,0,0)"/><stop offset="1" stop-color="rgb(0,255,0)"/></linearGradient><linearGradient id="q111" gradientUnits="userSpaceOnUse" x1="790.1" y1="510.4" x2="734.1" y2="550.2"><stop offset="0" stop-color="rgb(0,0,252)"/><stop offset="1" stop-color="rgb(0,0,255)"/></linearGradient><linearGradient id="q112" gradientUnits="userSpaceOnUse" x1="824.3" y1="524.8" x2="802" y2="577.9"><stop offset="0" stop-color="rgb(0,0,0)"/><stop offset="1" stop-color="rgb(0,255,0)"/></linearGradient><linearGradient id="q113" gradientUnits="userSpaceOnUse" x1="790.1" y1="510.4" x2="808.7" y2="536.1"><stop offset="0" stop-color="rgb(0,0,252)"/><stop offset="1" stop-color="rgb(0,0,255)"/></linearGradient><linearGradient id="q114" gradientUnits="userSpaceOnUse" x1="824.3" y1="524.8" x2="808.5" y2="575.5"><stop offset="0" stop-color="rgb(0,0,0)"/><stop offset="1" stop-color="rgb(0,255,0)"/></linearGradient><linearGradient id="q115" gradientUnits="userSpaceOnUse" x1="824.3" y1="524.8" x2="837.5" y2="553.8"><stop offset="0" stop-color="rgb(0,0,0)"/><stop offset="1" stop-color="rgb(0,255,0)"/></linearGradient><linearGradient id="q116" gradientUnits="userSpaceOnUse" x1="859.1" y1="535.4" x2="847.6" y2="583.9"><stop offset="0" stop-color="rgb(0,192,0)"/><stop offset="1" stop-color="rgb(0,255,0)"/></linearGradient><linearGradient id="q117" gradientUnits="userSpaceOnUse" x1="894.5" y1="539.1" x2="827.2" y2="551.4"><stop offset="0" stop-color="rgb(0,130,0)"/><stop offset="1" stop-color="rgb(0,255,0)"/></linearGradient><linearGradient id="q118" gradientUnits="userSpaceOnUse" x1="894.5" y1="539.1" x2="898.8" y2="571.7"><stop offset="0" stop-color="rgb(0,130,0)"/><stop offset="1" stop-color="rgb(0,255,0)"/></linearGradient><linearGradient id="q119" gradientUnits="userSpaceOnUse" x1="930.9" y1="540.4" x2="863.8" y2="560.3"><stop offset="0" stop-color="rgb(0,8,0)"/><stop offset="1" stop-color="rgb(0,255,0)"/></linearGradient><linearGradient id="q120" gradientUnits="userSpaceOnUse" x1="930.9" y1="540.4" x2="933.8" y2="569.3"><stop offset="0" stop-color="rgb(0,8,0)"/><stop offset="1" stop-color="rgb(0,255,0)"/></linearGradient><linearGradient id="q121" gradientUnits="userSpaceOnUse" x1="968.5" y1="537.8" x2="969.9" y2="568.6"><stop offset="0" stop-color="rgb(0,0,0)"/><stop offset="1" stop-color="rgb(0,250,0)"/></linearGradient><linearGradient id="q122" gradientUnits="userSpaceOnUse" x1="968.5" y1="537.8" x2="947.3" y2="520.4"><stop offset="0" stop-color="rgb(0,0,253)"/><stop offset="1" stop-color="rgb(0,0,255)"/></linearGradient><linearGradient id="q123" gradientUnits="userSpaceOnUse" x1="968.5" y1="537.8" x2="936" y2="519"><stop offset="0" stop-color="rgb(0,0,0)"/><stop offset="1" stop-color="rgb(0,250,0)"/></linearGradient><linearGradient id="q124" gradientUnits="userSpaceOnUse" x1="968.5" y1="537.8" x2="972.3" y2="560"><stop offset="0" stop-color="rgb(0,0,253)"/><stop offset="1" stop-color="rgb(0,0,255)"/></linearGradient><linearGradient id="q125" gradientUnits="userSpaceOnUse" x1="1007.6" y1="528.2" x2="1012.4" y2="548"><stop offset="0" stop-color="rgb(0,0,0)"/><stop offset="1" stop-color="rgb(0,50,0)"/></linearGradient><linearGradient id="q126" gradientUnits="userSpaceOnUse" x1="1007.6" y1="528.2" x2="955.1" y2="516.4"><stop offset="0" stop-color="rgb(0,0,249)"/><stop offset="1" stop-color="rgb(0,0,255)"/></linearGradient><linearGradient id="q127" gradientUnits="userSpaceOnUse" x1="984.2" y1="561.5" x2="958.9" y2="543.8"><stop offset="0" stop-color="rgb(0,0,0)"/><stop offset="1" stop-color="rgb(0,50,0)"/></linearGradient><linearGradient id="q128" gradientUnits="userSpaceOnUse" x1="1007.6" y1="528.2" x2="995.3" y2="577.6"><stop offset="0" stop-color="rgb(0,0,249)"/><stop offset="1" stop-color="rgb(0,0,255)"/></linearGradient><linearGradient id="q129" gradientUnits="userSpaceOnUse" x1="1047.9" y1="526.3" x2="1038.6" y2="572.4"><stop offset="0" stop-color="rgb(0,0,248)"/><stop offset="1" stop-color="rgb(0,0,254)"/></linearGradient><linearGradient id="q130" gradientUnits="userSpaceOnUse" x1="710.6" y1="476.2" x2="717.6" y2="448.8"><stop offset="0" stop-color="rgb(0,0,0)"/><stop offset="1" stop-color="rgb(26,0,0)"/></linearGradient><linearGradient id="q131" gradientUnits="userSpaceOnUse" x1="723.4" y1="479.5" x2="723.2" y2="463"><stop offset="0" stop-color="rgb(0,0,251)"/><stop offset="1" stop-color="rgb(0,0,255)"/></linearGradient><linearGradient id="q132" gradientUnits="userSpaceOnUse" x1="723.4" y1="479.5" x2="722.2" y2="467.8"><stop offset="0" stop-color="rgb(0,0,0)"/><stop offset="1" stop-color="rgb(26,0,0)"/></linearGradient><linearGradient id="q133" gradientUnits="userSpaceOnUse" x1="784.7" y1="473.1" x2="783.1" y2="461"><stop offset="0" stop-color="rgb(0,0,250)"/><stop offset="1" stop-color="rgb(0,0,255)"/></linearGradient><linearGradient id="q134" gradientUnits="userSpaceOnUse" x1="756.4" y1="493.7" x2="752.2" y2="473.6"><stop offset="0" stop-color="rgb(0,0,249)"/><stop offset="1" stop-color="rgb(0,0,251)"/></linearGradient><linearGradient id="q135" gradientUnits="userSpaceOnUse" x1="756.4" y1="493.7" x2="781.7" y2="453.3"><stop offset="0" stop-color="rgb(0,0,249)"/><stop offset="1" stop-color="rgb(0,0,251)"/></linearGradient><linearGradient id="q136" gradientUnits="userSpaceOnUse" x1="756.4" y1="493.7" x2="777.7" y2="520.3"><stop offset="0" stop-color="rgb(0,0,249)"/><stop offset="1" stop-color="rgb(0,0,252)"/></linearGradient><linearGradient id="q137" gradientUnits="userSpaceOnUse" x1="850.3" y1="488.5" x2="802.2" y2="473"><stop offset="0" stop-color="rgb(0,0,249)"/><stop offset="1" stop-color="rgb(0,0,252)"/></linearGradient><linearGradient id="q138" gradientUnits="userSpaceOnUse" x1="850.3" y1="488.5" x2="851.1" y2="524.2"><stop offset="0" stop-color="rgb(0,0,249)"/><stop offset="1" stop-color="rgb(0,0,255)"/></linearGradient><linearGradient id="q139" gradientUnits="userSpaceOnUse" x1="850.3" y1="488.5" x2="850.2" y2="524.8"><stop offset="0" stop-color="rgb(0,0,249)"/><stop offset="1" stop-color="rgb(0,0,255)"/></linearGradient><linearGradient id="q140" gradientUnits="userSpaceOnUse" x1="824.3" y1="524.8" x2="833.3" y2="546.2"><stop offset="0" stop-color="rgb(0,0,0)"/><stop offset="1" stop-color="rgb(0,192,0)"/></linearGradient><linearGradient id="q141" gradientUnits="userSpaceOnUse" x1="884.3" y1="499.7" x2="873.5" y2="539.3"><stop offset="0" stop-color="rgb(0,0,251)"/><stop offset="1" stop-color="rgb(0,0,255)"/></linearGradient><linearGradient id="q142" gradientUnits="userSpaceOnUse" x1="919" y1="508.5" x2="908.9" y2="548"><stop offset="0" stop-color="rgb(0,0,0)"/><stop offset="1" stop-color="rgb(0,192,0)"/></linearGradient><linearGradient id="q143" gradientUnits="userSpaceOnUse" x1="884.3" y1="499.7" x2="885" y2="534.8"><stop offset="0" stop-color="rgb(0,0,251)"/><stop offset="1" stop-color="rgb(0,0,255)"/></linearGradient><linearGradient id="q144" gradientUnits="userSpaceOnUse" x1="919" y1="508.5" x2="883.2" y2="554.2"><stop offset="0" stop-color="rgb(0,0,0)"/><stop offset="1" stop-color="rgb(0,192,0)"/></linearGradient><linearGradient id="q145" gradientUnits="userSpaceOnUse" x1="919" y1="508.5" x2="915.5" y2="541.4"><stop offset="0" stop-color="rgb(0,0,252)"/><stop offset="1" stop-color="rgb(0,0,255)"/></linearGradient><linearGradient id="q146" gradientUnits="userSpaceOnUse" x1="954.5" y1="512.2" x2="951" y2="545.1"><stop offset="0" stop-color="rgb(0,0,0)"/><stop offset="1" stop-color="rgb(0,130,0)"/></linearGradient><linearGradient id="q147" gradientUnits="userSpaceOnUse" x1="954.5" y1="512.2" x2="948.6" y2="548"><stop offset="0" stop-color="rgb(0,0,252)"/><stop offset="1" stop-color="rgb(0,0,255)"/></linearGradient><linearGradient id="q148" gradientUnits="userSpaceOnUse" x1="954.5" y1="512.2" x2="928.9" y2="493.1"><stop offset="0" stop-color="rgb(0,0,0)"/><stop offset="1" stop-color="rgb(0,130,0)"/></linearGradient><linearGradient id="q149" gradientUnits="userSpaceOnUse" x1="954.5" y1="512.2" x2="953.4" y2="541.2"><stop offset="0" stop-color="rgb(0,0,252)"/><stop offset="1" stop-color="rgb(0,0,255)"/></linearGradient><linearGradient id="q150" gradientUnits="userSpaceOnUse" x1="991" y1="513.4" x2="990.1" y2="542.3"><stop offset="0" stop-color="rgb(0,0,0)"/><stop offset="1" stop-color="rgb(0,8,0)"/></linearGradient><linearGradient id="q151" gradientUnits="userSpaceOnUse" x1="991" y1="513.4" x2="979.6" y2="554.1"><stop offset="0" stop-color="rgb(0,0,251)"/><stop offset="1" stop-color="rgb(0,0,255)"/></linearGradient><linearGradient id="q152" gradientUnits="userSpaceOnUse" x1="968.5" y1="537.8" x2="949.5" y2="520.3"><stop offset="0" stop-color="rgb(0,0,0)"/><stop offset="1" stop-color="rgb(0,8,0)"/></linearGradient><linearGradient id="q153" gradientUnits="userSpaceOnUse" x1="991" y1="513.4" x2="957.4" y2="559.7"><stop offset="0" stop-color="rgb(0,0,251)"/><stop offset="1" stop-color="rgb(0,0,255)"/></linearGradient><linearGradient id="q154" gradientUnits="userSpaceOnUse" x1="1028.9" y1="508.4" x2="977.4" y2="549"><stop offset="0" stop-color="rgb(0,0,248)"/><stop offset="1" stop-color="rgb(0,0,253)"/></linearGradient><linearGradient id="q155" gradientUnits="userSpaceOnUse" x1="1028.9" y1="508.4" x2="990.8" y2="490.5"><stop offset="0" stop-color="rgb(0,0,248)"/><stop offset="1" stop-color="rgb(0,0,253)"/></linearGradient><linearGradient id="q156" gradientUnits="userSpaceOnUse" x1="1028.9" y1="508.4" x2="1035.5" y2="522.1"><stop offset="0" stop-color="rgb(0,0,248)"/><stop offset="1" stop-color="rgb(0,0,250)"/></linearGradient><linearGradient id="q157" gradientUnits="userSpaceOnUse" x1="1047.9" y1="526.3" x2="1044.5" y2="512.2"><stop offset="0" stop-color="rgb(0,0,248)"/><stop offset="1" stop-color="rgb(0,0,250)"/></linearGradient><linearGradient id="q158" gradientUnits="userSpaceOnUse" x1="1047.9" y1="526.3" x2="1065.7" y2="544.4"><stop offset="0" stop-color="rgb(0,0,0)"/><stop offset="1" stop-color="rgb(22,0,0)"/></linearGradient><linearGradient id="q159" gradientUnits="userSpaceOnUse" x1="1047.9" y1="526.3" x2="1108.5" y2="526"><stop offset="0" stop-color="rgb(0,0,248)"/><stop offset="1" stop-color="rgb(0,0,255)"/></linearGradient><linearGradient id="q160" gradientUnits="userSpaceOnUse" x1="771.5" y1="462.6" x2="782" y2="407.9"><stop offset="0" stop-color="rgb(26,0,0)"/><stop offset="1" stop-color="rgb(184,0,0)"/></linearGradient><linearGradient id="q161" gradientUnits="userSpaceOnUse" x1="771.5" y1="462.6" x2="726.1" y2="356.1"><stop offset="0" stop-color="rgb(0,0,0)"/><stop offset="1" stop-color="rgb(0,58,0)"/></linearGradient><linearGradient id="q162" gradientUnits="userSpaceOnUse" x1="659.5" y1="384.5" x2="731.3" y2="489.9"><stop offset="0" stop-color="rgb(0,0,194)"/><stop offset="1" stop-color="rgb(0,0,255)"/></linearGradient><linearGradient id="q163" gradientUnits="userSpaceOnUse" x1="771.5" y1="462.6" x2="779.5" y2="410.5"><stop offset="0" stop-color="rgb(26,0,0)"/><stop offset="1" stop-color="rgb(169,0,0)"/></linearGradient><linearGradient id="q164" gradientUnits="userSpaceOnUse" x1="771.5" y1="462.6" x2="704.4" y2="425.2"><stop offset="0" stop-color="rgb(0,0,0)"/><stop offset="1" stop-color="rgb(0,39,0)"/></linearGradient><linearGradient id="q165" gradientUnits="userSpaceOnUse" x1="717.9" y1="401.1" x2="785.5" y2="433.4"><stop offset="0" stop-color="rgb(0,0,216)"/><stop offset="1" stop-color="rgb(0,0,255)"/></linearGradient><linearGradient id="q166" gradientUnits="userSpaceOnUse" x1="784.7" y1="473.1" x2="788.7" y2="422.9"><stop offset="0" stop-color="rgb(0,0,0)"/><stop offset="1" stop-color="rgb(138,0,0)"/></linearGradient><linearGradient id="q167" gradientUnits="userSpaceOnUse" x1="771.5" y1="462.6" x2="794" y2="434.2"><stop offset="0" stop-color="rgb(0,0,0)"/><stop offset="1" stop-color="rgb(0,7,0)"/></linearGradient><linearGradient id="q168" gradientUnits="userSpaceOnUse" x1="778.8" y1="422.1" x2="765" y2="424.5"><stop offset="0" stop-color="rgb(0,0,249)"/><stop offset="1" stop-color="rgb(0,0,255)"/></linearGradient><linearGradient id="q169" gradientUnits="userSpaceOnUse" x1="784.7" y1="473.1" x2="785.4" y2="422.2"><stop offset="0" stop-color="rgb(0,0,0)"/><stop offset="1" stop-color="rgb(138,0,0)"/></linearGradient><linearGradient id="q170" gradientUnits="userSpaceOnUse" x1="784.7" y1="473.1" x2="765.2" y2="428.1"><stop offset="0" stop-color="rgb(0,0,0)"/><stop offset="1" stop-color="rgb(0,7,0)"/></linearGradient><linearGradient id="q171" gradientUnits="userSpaceOnUse" x1="778.8" y1="422.1" x2="844.6" y2="431.3"><stop offset="0" stop-color="rgb(0,0,249)"/><stop offset="1" stop-color="rgb(0,0,255)"/></linearGradient><linearGradient id="q172" gradientUnits="userSpaceOnUse" x1="784.7" y1="473.1" x2="786.8" y2="444.1"><stop offset="0" stop-color="rgb(0,0,0)"/><stop offset="1" stop-color="rgb(70,0,0)"/></linearGradient><linearGradient id="q173" gradientUnits="userSpaceOnUse" x1="784.7" y1="473.1" x2="795.2" y2="435"><stop offset="0" stop-color="rgb(0,0,250)"/><stop offset="1" stop-color="rgb(0,0,255)"/></linearGradient><linearGradient id="q174" gradientUnits="userSpaceOnUse" x1="816.9" y1="475.3" x2="829.6" y2="443"><stop offset="0" stop-color="rgb(0,0,0)"/><stop offset="1" stop-color="rgb(70,0,0)"/></linearGradient><linearGradient id="q175" gradientUnits="userSpaceOnUse" x1="850.3" y1="488.5" x2="846.2" y2="447.6"><stop offset="0" stop-color="rgb(0,0,249)"/><stop offset="1" stop-color="rgb(0,0,255)"/></linearGradient><linearGradient id="q176" gradientUnits="userSpaceOnUse" x1="850.3" y1="488.5" x2="838" y2="449.3"><stop offset="0" stop-color="rgb(0,0,0)"/><stop offset="1" stop-color="rgb(70,0,0)"/></linearGradient><linearGradient id="q177" gradientUnits="userSpaceOnUse" x1="850.3" y1="488.5" x2="850.8" y2="448.1"><stop offset="0" stop-color="rgb(0,0,249)"/><stop offset="1" stop-color="rgb(0,0,255)"/></linearGradient><linearGradient id="q178" gradientUnits="userSpaceOnUse" x1="850.3" y1="488.5" x2="904.1" y2="496.6"><stop offset="0" stop-color="rgb(0,0,249)"/><stop offset="1" stop-color="rgb(0,0,252)"/></linearGradient><linearGradient id="q179" gradientUnits="userSpaceOnUse" x1="976.4" y1="485.2" x2="918.4" y2="507.1"><stop offset="0" stop-color="rgb(0,0,248)"/><stop offset="1" stop-color="rgb(0,0,252)"/></linearGradient><linearGradient id="q180" gradientUnits="userSpaceOnUse" x1="976.4" y1="485.2" x2="971.5" y2="516.7"><stop offset="0" stop-color="rgb(0,0,248)"/><stop offset="1" stop-color="rgb(0,0,252)"/></linearGradient><linearGradient id="q181" gradientUnits="userSpaceOnUse" x1="976.4" y1="485.2" x2="967.7" y2="516"><stop offset="0" stop-color="rgb(0,0,248)"/><stop offset="1" stop-color="rgb(0,0,252)"/></linearGradient><linearGradient id="q182" gradientUnits="userSpaceOnUse" x1="976.4" y1="485.2" x2="980.9" y2="514.9"><stop offset="0" stop-color="rgb(0,0,248)"/><stop offset="1" stop-color="rgb(0,0,251)"/></linearGradient><linearGradient id="q183" gradientUnits="userSpaceOnUse" x1="1028.9" y1="508.4" x2="1023.3" y2="497.2"><stop offset="0" stop-color="rgb(0,0,248)"/><stop offset="1" stop-color="rgb(0,0,251)"/></linearGradient><linearGradient id="q184" gradientUnits="userSpaceOnUse" x1="1028.9" y1="508.4" x2="1065.7" y2="498.4"><stop offset="0" stop-color="rgb(0,0,248)"/><stop offset="1" stop-color="rgb(0,0,250)"/></linearGradient><linearGradient id="q185" gradientUnits="userSpaceOnUse" x1="1067.9" y1="506.6" x2="1100.4" y2="467"><stop offset="0" stop-color="rgb(0,0,0)"/><stop offset="1" stop-color="rgb(26,0,0)"/></linearGradient><linearGradient id="q186" gradientUnits="userSpaceOnUse" x1="1048.5" y1="490.7" x2="1114.5" y2="462.3"><stop offset="0" stop-color="rgb(0,0,250)"/><stop offset="1" stop-color="rgb(0,0,255)"/></linearGradient><linearGradient id="q187" gradientUnits="userSpaceOnUse" x1="1067.9" y1="506.6" x2="1100.4" y2="527.1"><stop offset="0" stop-color="rgb(0,0,0)"/><stop offset="1" stop-color="rgb(26,0,0)"/></linearGradient><linearGradient id="q188" gradientUnits="userSpaceOnUse" x1="1067.9" y1="506.6" x2="1089.3" y2="526.4"><stop offset="0" stop-color="rgb(0,0,250)"/><stop offset="1" stop-color="rgb(0,0,255)"/></linearGradient><linearGradient id="q189" gradientUnits="userSpaceOnUse" x1="1108.4" y1="502.2" x2="1158.3" y2="542.6"><stop offset="0" stop-color="rgb(22,0,0)"/><stop offset="1" stop-color="rgb(95,0,0)"/></linearGradient><linearGradient id="q190" gradientUnits="userSpaceOnUse" x1="1108.4" y1="502.2" x2="1116.2" y2="453.4"><stop offset="0" stop-color="rgb(22,0,0)"/><stop offset="1" stop-color="rgb(123,0,0)"/></linearGradient><linearGradient id="q191" gradientUnits="userSpaceOnUse" x1="1108.4" y1="502.2" x2="1111.6" y2="463.5"><stop offset="0" stop-color="rgb(22,0,0)"/><stop offset="1" stop-color="rgb(131,0,0)"/></linearGradient><linearGradient id="q192" gradientUnits="userSpaceOnUse" x1="1108.4" y1="502.2" x2="1110" y2="517.1"><stop offset="0" stop-color="rgb(0,0,0)"/><stop offset="1" stop-color="rgb(0,2,0)"/></linearGradient><linearGradient id="q193" gradientUnits="userSpaceOnUse" x1="1386.4" y1="486.8" x2="1385.1" y2="473.2"><stop offset="0" stop-color="rgb(0,0,253)"/><stop offset="1" stop-color="rgb(0,0,255)"/></linearGradient><linearGradient id="q194" gradientUnits="userSpaceOnUse" x1="885.2" y1="432.8" x2="856" y2="488.1"><stop offset="0" stop-color="rgb(108,0,0)"/><stop offset="1" stop-color="rgb(184,0,0)"/></linearGradient><linearGradient id="q195" gradientUnits="userSpaceOnUse" x1="885.2" y1="432.8" x2="882.6" y2="374.8"><stop offset="0" stop-color="rgb(0,0,0)"/><stop offset="1" stop-color="rgb(0,58,0)"/></linearGradient><linearGradient id="q196" gradientUnits="userSpaceOnUse" x1="659.5" y1="384.5" x2="657.9" y2="423.3"><stop offset="0" stop-color="rgb(0,0,194)"/><stop offset="1" stop-color="rgb(0,0,255)"/></linearGradient><linearGradient id="q197" gradientUnits="userSpaceOnUse" x1="885.2" y1="432.8" x2="873.8" y2="372.1"><stop offset="0" stop-color="rgb(108,0,0)"/><stop offset="1" stop-color="rgb(169,0,0)"/></linearGradient><linearGradient id="q198" gradientUnits="userSpaceOnUse" x1="885.2" y1="432.8" x2="886.5" y2="412.4"><stop offset="0" stop-color="rgb(0,0,0)"/><stop offset="1" stop-color="rgb(0,39,0)"/></linearGradient><linearGradient id="q199" gradientUnits="userSpaceOnUse" x1="717.9" y1="401.1" x2="716.4" y2="420.3"><stop offset="0" stop-color="rgb(0,0,216)"/><stop offset="1" stop-color="rgb(0,0,255)"/></linearGradient><linearGradient id="q200" gradientUnits="userSpaceOnUse" x1="842.3" y1="448" x2="842" y2="421.6"><stop offset="0" stop-color="rgb(70,0,0)"/><stop offset="1" stop-color="rgb(138,0,0)"/></linearGradient><linearGradient id="q201" gradientUnits="userSpaceOnUse" x1="842.3" y1="448" x2="827" y2="405"><stop offset="0" stop-color="rgb(0,0,0)"/><stop offset="1" stop-color="rgb(0,7,0)"/></linearGradient><linearGradient id="q202" gradientUnits="userSpaceOnUse" x1="778.8" y1="422.1" x2="794.1" y2="465.1"><stop offset="0" stop-color="rgb(0,0,249)"/><stop offset="1" stop-color="rgb(0,0,255)"/></linearGradient><linearGradient id="q203" gradientUnits="userSpaceOnUse" x1="842.3" y1="448" x2="841.9" y2="434.1"><stop offset="0" stop-color="rgb(70,0,0)"/><stop offset="1" stop-color="rgb(108,0,0)"/></linearGradient><linearGradient id="q204" gradientUnits="userSpaceOnUse" x1="930.2" y1="446.3" x2="929.6" y2="435.4"><stop offset="0" stop-color="rgb(59,0,0)"/><stop offset="1" stop-color="rgb(95,0,0)"/></linearGradient><linearGradient id="q205" gradientUnits="userSpaceOnUse" x1="908" y1="470.5" x2="906.2" y2="443.7"><stop offset="0" stop-color="rgb(0,0,0)"/><stop offset="1" stop-color="rgb(70,0,0)"/></linearGradient><linearGradient id="q206" gradientUnits="userSpaceOnUse" x1="908" y1="470.5" x2="907.5" y2="446.8"><stop offset="0" stop-color="rgb(0,0,252)"/><stop offset="1" stop-color="rgb(0,0,255)"/></linearGradient><linearGradient id="q207" gradientUnits="userSpaceOnUse" x1="908" y1="470.5" x2="906.4" y2="447.9"><stop offset="0" stop-color="rgb(0,0,0)"/><stop offset="1" stop-color="rgb(59,0,0)"/></linearGradient><linearGradient id="q208" gradientUnits="userSpaceOnUse" x1="908" y1="470.5" x2="916.6" y2="442.2"><stop offset="0" stop-color="rgb(0,0,252)"/><stop offset="1" stop-color="rgb(0,0,255)"/></linearGradient><linearGradient id="q209" gradientUnits="userSpaceOnUse" x1="908" y1="470.5" x2="907.5" y2="458.2"><stop offset="0" stop-color="rgb(0,0,0)"/><stop offset="1" stop-color="rgb(27,0,0)"/></linearGradient><linearGradient id="q210" gradientUnits="userSpaceOnUse" x1="908" y1="470.5" x2="907.8" y2="457.2"><stop offset="0" stop-color="rgb(0,0,252)"/><stop offset="1" stop-color="rgb(0,0,255)"/></linearGradient><linearGradient id="q211" gradientUnits="userSpaceOnUse" x1="908" y1="470.5" x2="913.2" y2="446.3"><stop offset="0" stop-color="rgb(0,0,0)"/><stop offset="1" stop-color="rgb(7,0,0)"/></linearGradient><linearGradient id="q212" gradientUnits="userSpaceOnUse" x1="976.4" y1="485.2" x2="976.3" y2="464.4"><stop offset="0" stop-color="rgb(0,0,248)"/><stop offset="1" stop-color="rgb(0,0,253)"/></linearGradient><linearGradient id="q213" gradientUnits="userSpaceOnUse" x1="976.4" y1="485.2" x2="972.6" y2="470.7"><stop offset="0" stop-color="rgb(0,0,0)"/><stop offset="1" stop-color="rgb(7,0,0)"/></linearGradient><linearGradient id="q214" gradientUnits="userSpaceOnUse" x1="976.4" y1="485.2" x2="977.3" y2="463.5"><stop offset="0" stop-color="rgb(0,0,248)"/><stop offset="1" stop-color="rgb(0,0,253)"/></linearGradient><linearGradient id="q215" gradientUnits="userSpaceOnUse" x1="976.4" y1="485.2" x2="977.5" y2="466.3"><stop offset="0" stop-color="rgb(0,0,248)"/><stop offset="1" stop-color="rgb(0,0,252)"/></linearGradient><linearGradient id="q216" gradientUnits="userSpaceOnUse" x1="976.4" y1="485.2" x2="985.6" y2="452"><stop offset="0" stop-color="rgb(0,0,248)"/><stop offset="1" stop-color="rgb(0,0,251)"/></linearGradient><linearGradient id="q217" gradientUnits="userSpaceOnUse" x1="1048.5" y1="490.7" x2="1053.8" y2="466.5"><stop offset="0" stop-color="rgb(0,0,250)"/><stop offset="1" stop-color="rgb(0,0,252)"/></linearGradient><linearGradient id="q218" gradientUnits="userSpaceOnUse" x1="1048.5" y1="490.7" x2="1050.9" y2="500.5"><stop offset="0" stop-color="rgb(0,0,0)"/><stop offset="1" stop-color="rgb(11,0,0)"/></linearGradient><linearGradient id="q219" gradientUnits="userSpaceOnUse" x1="1048.5" y1="490.7" x2="1128.8" y2="453.2"><stop offset="0" stop-color="rgb(0,0,250)"/><stop offset="1" stop-color="rgb(0,0,253)"/></linearGradient><linearGradient id="q220" gradientUnits="userSpaceOnUse" x1="1048.5" y1="490.7" x2="1050.4" y2="501.2"><stop offset="0" stop-color="rgb(0,0,0)"/><stop offset="1" stop-color="rgb(26,0,0)"/></linearGradient><linearGradient id="q221" gradientUnits="userSpaceOnUse" x1="1048.5" y1="490.7" x2="1052.5" y2="506.3"><stop offset="0" stop-color="rgb(0,0,250)"/><stop offset="1" stop-color="rgb(0,0,255)"/></linearGradient><linearGradient id="q222" gradientUnits="userSpaceOnUse" x1="1140.6" y1="478.5" x2="1143.8" y2="485.9"><stop offset="0" stop-color="rgb(11,0,0)"/><stop offset="1" stop-color="rgb(67,0,0)"/></linearGradient><linearGradient id="q223" gradientUnits="userSpaceOnUse" x1="1140.6" y1="478.5" x2="1141.8" y2="482.3"><stop offset="0" stop-color="rgb(0,0,253)"/><stop offset="1" stop-color="rgb(0,0,255)"/></linearGradient><linearGradient id="q224" gradientUnits="userSpaceOnUse" x1="1125.3" y1="487.5" x2="1206.9" y2="512.1"><stop offset="0" stop-color="rgb(26,0,0)"/><stop offset="1" stop-color="rgb(100,0,0)"/></linearGradient><linearGradient id="q225" gradientUnits="userSpaceOnUse" x1="1125.3" y1="487.5" x2="1192.8" y2="521.9"><stop offset="0" stop-color="rgb(26,0,0)"/><stop offset="1" stop-color="rgb(100,0,0)"/></linearGradient><linearGradient id="q226" gradientUnits="userSpaceOnUse" x1="1207.3" y1="482" x2="1291" y2="465.3"><stop offset="0" stop-color="rgb(95,0,0)"/><stop offset="1" stop-color="rgb(123,0,0)"/></linearGradient><linearGradient id="q227" gradientUnits="userSpaceOnUse" x1="1220.1" y1="468.4" x2="1220" y2="486.2"><stop offset="0" stop-color="rgb(100,0,0)"/><stop offset="1" stop-color="rgb(131,0,0)"/></linearGradient><linearGradient id="q228" gradientUnits="userSpaceOnUse" x1="1294.3" y1="481.9" x2="1296.4" y2="470.4"><stop offset="0" stop-color="rgb(0,0,0)"/><stop offset="1" stop-color="rgb(0,2,0)"/></linearGradient><linearGradient id="q229" gradientUnits="userSpaceOnUse" x1="1386.4" y1="486.8" x2="1384.3" y2="498.3"><stop offset="0" stop-color="rgb(0,0,253)"/><stop offset="1" stop-color="rgb(0,0,255)"/></linearGradient><linearGradient id="q230" gradientUnits="userSpaceOnUse" x1="885.2" y1="432.8" x2="889.5" y2="359"><stop offset="0" stop-color="rgb(108,0,0)"/><stop offset="1" stop-color="rgb(185,0,0)"/></linearGradient><linearGradient id="q231" gradientUnits="userSpaceOnUse" x1="885.2" y1="432.8" x2="883.9" y2="361.4"><stop offset="0" stop-color="rgb(0,0,0)"/><stop offset="1" stop-color="rgb(0,58,0)"/></linearGradient><linearGradient id="q232" gradientUnits="userSpaceOnUse" x1="920.2" y1="360.8" x2="923.1" y2="431.2"><stop offset="0" stop-color="rgb(0,0,194)"/><stop offset="1" stop-color="rgb(0,0,255)"/></linearGradient><linearGradient id="q233" gradientUnits="userSpaceOnUse" x1="885.2" y1="432.8" x2="882.1" y2="377.3"><stop offset="0" stop-color="rgb(108,0,0)"/><stop offset="1" stop-color="rgb(176,0,0)"/></linearGradient><linearGradient id="q234" gradientUnits="userSpaceOnUse" x1="885.2" y1="432.8" x2="877.9" y2="388.3"><stop offset="0" stop-color="rgb(0,0,0)"/><stop offset="1" stop-color="rgb(0,48,0)"/></linearGradient><linearGradient id="q235" gradientUnits="userSpaceOnUse" x1="977" y1="372" x2="984.7" y2="414.9"><stop offset="0" stop-color="rgb(0,0,205)"/><stop offset="1" stop-color="rgb(0,0,255)"/></linearGradient><linearGradient id="q236" gradientUnits="userSpaceOnUse" x1="897.9" y1="437.2" x2="893.5" y2="408.6"><stop offset="0" stop-color="rgb(95,0,0)"/><stop offset="1" stop-color="rgb(155,0,0)"/></linearGradient><linearGradient id="q237" gradientUnits="userSpaceOnUse" x1="885.2" y1="432.8" x2="915.3" y2="345"><stop offset="0" stop-color="rgb(0,0,0)"/><stop offset="1" stop-color="rgb(0,23,0)"/></linearGradient><linearGradient id="q238" gradientUnits="userSpaceOnUse" x1="1035.9" y1="386.5" x2="1005.7" y2="474.3"><stop offset="0" stop-color="rgb(0,0,233)"/><stop offset="1" stop-color="rgb(0,0,255)"/></linearGradient><linearGradient id="q239" gradientUnits="userSpaceOnUse" x1="897.9" y1="437.2" x2="897.3" y2="388.3"><stop offset="0" stop-color="rgb(95,0,0)"/><stop offset="1" stop-color="rgb(155,0,0)"/></linearGradient><linearGradient id="q240" gradientUnits="userSpaceOnUse" x1="897.9" y1="437.2" x2="893.6" y2="406.6"><stop offset="0" stop-color="rgb(0,0,0)"/><stop offset="1" stop-color="rgb(0,23,0)"/></linearGradient><linearGradient id="q241" gradientUnits="userSpaceOnUse" x1="1035.9" y1="386.5" x2="1040.3" y2="416"><stop offset="0" stop-color="rgb(0,0,233)"/><stop offset="1" stop-color="rgb(0,0,255)"/></linearGradient><linearGradient id="q242" gradientUnits="userSpaceOnUse" x1="930.2" y1="446.3" x2="927" y2="418.5"><stop offset="0" stop-color="rgb(59,0,0)"/><stop offset="1" stop-color="rgb(138,0,0)"/></linearGradient><linearGradient id="q243" gradientUnits="userSpaceOnUse" x1="897.9" y1="437.2" x2="922.6" y2="349.9"><stop offset="0" stop-color="rgb(0,0,0)"/><stop offset="1" stop-color="rgb(0,7,0)"/></linearGradient><linearGradient id="q244" gradientUnits="userSpaceOnUse" x1="1097.1" y1="399.1" x2="1072.4" y2="486.5"><stop offset="0" stop-color="rgb(0,0,249)"/><stop offset="1" stop-color="rgb(0,0,255)"/></linearGradient><linearGradient id="q245" gradientUnits="userSpaceOnUse" x1="963.2" y1="456.3" x2="959.2" y2="411.5"><stop offset="0" stop-color="rgb(27,0,0)"/><stop offset="1" stop-color="rgb(138,0,0)"/></linearGradient><linearGradient id="q246" gradientUnits="userSpaceOnUse" x1="930.2" y1="446.3" x2="957.4" y2="356.8"><stop offset="0" stop-color="rgb(0,0,0)"/><stop offset="1" stop-color="rgb(0,7,0)"/></linearGradient><linearGradient id="q247" gradientUnits="userSpaceOnUse" x1="1097.1" y1="399.1" x2="1069.9" y2="488.7"><stop offset="0" stop-color="rgb(0,0,249)"/><stop offset="1" stop-color="rgb(0,0,255)"/></linearGradient><linearGradient id="q248" gradientUnits="userSpaceOnUse" x1="963.2" y1="456.3" x2="968.2" y2="389.5"><stop offset="0" stop-color="rgb(27,0,0)"/><stop offset="1" stop-color="rgb(138,0,0)"/></linearGradient><linearGradient id="q249" gradientUnits="userSpaceOnUse" x1="963.2" y1="456.3" x2="957.4" y2="431.4"><stop offset="0" stop-color="rgb(0,0,0)"/><stop offset="1" stop-color="rgb(0,7,0)"/></linearGradient><linearGradient id="q250" gradientUnits="userSpaceOnUse" x1="1097.1" y1="399.1" x2="1102.8" y2="424.1"><stop offset="0" stop-color="rgb(0,0,249)"/><stop offset="1" stop-color="rgb(0,0,255)"/></linearGradient><linearGradient id="q251" gradientUnits="userSpaceOnUse" x1="996.8" y1="464.3" x2="996" y2="413.3"><stop offset="0" stop-color="rgb(7,0,0)"/><stop offset="1" stop-color="rgb(127,0,0)"/></linearGradient><linearGradient id="q252" gradientUnits="userSpaceOnUse" x1="996.8" y1="464.3" x2="993.4" y2="449.3"><stop offset="0" stop-color="rgb(0,0,253)"/><stop offset="1" stop-color="rgb(0,0,255)"/></linearGradient><linearGradient id="q253" gradientUnits="userSpaceOnUse" x1="1031.3" y1="469.4" x2="1034.8" y2="404"><stop offset="0" stop-color="rgb(1,0,0)"/><stop offset="1" stop-color="rgb(127,0,0)"/></linearGradient><linearGradient id="q254" gradientUnits="userSpaceOnUse" x1="1031.3" y1="469.4" x2="1025.6" y2="430.6"><stop offset="0" stop-color="rgb(0,0,252)"/><stop offset="1" stop-color="rgb(0,0,255)"/></linearGradient><linearGradient id="q255" gradientUnits="userSpaceOnUse" x1="1031.3" y1="469.4" x2="1034.2" y2="405"><stop offset="0" stop-color="rgb(1,0,0)"/><stop offset="1" stop-color="rgb(127,0,0)"/></linearGradient><linearGradient id="q256" gradientUnits="userSpaceOnUse" x1="1031.3" y1="469.4" x2="1040.7" y2="395.4"><stop offset="0" stop-color="rgb(0,0,252)"/><stop offset="1" stop-color="rgb(0,0,255)"/></linearGradient><linearGradient id="q257" gradientUnits="userSpaceOnUse" x1="1066.7" y1="474.4" x2="1076.6" y2="399.3"><stop offset="0" stop-color="rgb(0,0,0)"/><stop offset="1" stop-color="rgb(116,0,0)"/></linearGradient><linearGradient id="q258" gradientUnits="userSpaceOnUse" x1="1066.7" y1="474.4" x2="1063.6" y2="430.7"><stop offset="0" stop-color="rgb(0,0,251)"/><stop offset="1" stop-color="rgb(0,0,255)"/></linearGradient><linearGradient id="q259" gradientUnits="userSpaceOnUse" x1="1066.7" y1="474.4" x2="1072.1" y2="406.8"><stop offset="0" stop-color="rgb(0,0,0)"/><stop offset="1" stop-color="rgb(116,0,0)"/></linearGradient><linearGradient id="q260" gradientUnits="userSpaceOnUse" x1="1066.7" y1="474.4" x2="1142.4" y2="361.8"><stop offset="0" stop-color="rgb(0,0,251)"/><stop offset="1" stop-color="rgb(0,0,255)"/></linearGradient><linearGradient id="q261" gradientUnits="userSpaceOnUse" x1="1103.1" y1="477.3" x2="1109.4" y2="407.3"><stop offset="0" stop-color="rgb(0,0,0)"/><stop offset="1" stop-color="rgb(118,0,0)"/></linearGradient><linearGradient id="q262" gradientUnits="userSpaceOnUse" x1="1103.1" y1="477.3" x2="1108.1" y2="410.2"><stop offset="0" stop-color="rgb(0,0,252)"/><stop offset="1" stop-color="rgb(0,0,255)"/></linearGradient><linearGradient id="q263" gradientUnits="userSpaceOnUse" x1="1103.1" y1="477.3" x2="1137.9" y2="371.7"><stop offset="0" stop-color="rgb(0,0,0)"/><stop offset="1" stop-color="rgb(118,0,0)"/></linearGradient><linearGradient id="q264" gradientUnits="userSpaceOnUse" x1="1103.1" y1="477.3" x2="1119.8" y2="511.4"><stop offset="0" stop-color="rgb(0,0,252)"/><stop offset="1" stop-color="rgb(0,0,255)"/></linearGradient><linearGradient id="q265" gradientUnits="userSpaceOnUse" x1="1140.6" y1="478.5" x2="1148" y2="494.4"><stop offset="0" stop-color="rgb(11,0,0)"/><stop offset="1" stop-color="rgb(118,0,0)"/></linearGradient><linearGradient id="q266" gradientUnits="userSpaceOnUse" x1="1140.6" y1="478.5" x2="1143" y2="484.6"><stop offset="0" stop-color="rgb(0,0,253)"/><stop offset="1" stop-color="rgb(0,0,255)"/></linearGradient><linearGradient id="q267" gradientUnits="userSpaceOnUse" x1="1179.9" y1="470.2" x2="1212" y2="372"><stop offset="0" stop-color="rgb(67,0,0)"/><stop offset="1" stop-color="rgb(133,0,0)"/></linearGradient><linearGradient id="q268" gradientUnits="userSpaceOnUse" x1="1179.9" y1="470.2" x2="1189.7" y2="495.4"><stop offset="0" stop-color="rgb(0,0,0)"/><stop offset="1" stop-color="rgb(0,3,0)"/></linearGradient><linearGradient id="q269" gradientUnits="userSpaceOnUse" x1="1372.4" y1="424.4" x2="1362.6" y2="399.2"><stop offset="0" stop-color="rgb(0,0,252)"/><stop offset="1" stop-color="rgb(0,0,255)"/></linearGradient><linearGradient id="q270" gradientUnits="userSpaceOnUse" x1="1179.9" y1="470.2" x2="1188.6" y2="493.4"><stop offset="0" stop-color="rgb(67,0,0)"/><stop offset="1" stop-color="rgb(133,0,0)"/></linearGradient><linearGradient id="q271" gradientUnits="userSpaceOnUse" x1="1179.9" y1="470.2" x2="1178.2" y2="433.5"><stop offset="0" stop-color="rgb(0,0,0)"/><stop offset="1" stop-color="rgb(0,3,0)"/></linearGradient><linearGradient id="q272" gradientUnits="userSpaceOnUse" x1="1372.4" y1="424.4" x2="1374.1" y2="461.1"><stop offset="0" stop-color="rgb(0,0,252)"/><stop offset="1" stop-color="rgb(0,0,255)"/></linearGradient><linearGradient id="q273" gradientUnits="userSpaceOnUse" x1="1220.1" y1="468.4" x2="1287.5" y2="338.3"><stop offset="0" stop-color="rgb(100,0,0)"/><stop offset="1" stop-color="rgb(144,0,0)"/></linearGradient><linearGradient id="q274" gradientUnits="userSpaceOnUse" x1="1220.1" y1="468.4" x2="1232.9" y2="503.4"><stop offset="0" stop-color="rgb(0,0,0)"/><stop offset="1" stop-color="rgb(0,11,0)"/></linearGradient><linearGradient id="q275" gradientUnits="userSpaceOnUse" x1="1451.2" y1="423.1" x2="1438.3" y2="388.1"><stop offset="0" stop-color="rgb(0,0,246)"/><stop offset="1" stop-color="rgb(0,0,255)"/></linearGradient><linearGradient id="q276" gradientUnits="userSpaceOnUse" x1="1220.1" y1="468.4" x2="1280.1" y2="321.1"><stop offset="0" stop-color="rgb(100,0,0)"/><stop offset="1" stop-color="rgb(154,0,0)"/></linearGradient><linearGradient id="q277" gradientUnits="userSpaceOnUse" x1="1220.1" y1="468.4" x2="1236.4" y2="519.6"><stop offset="0" stop-color="rgb(0,0,0)"/><stop offset="1" stop-color="rgb(0,22,0)"/></linearGradient><linearGradient id="q278" gradientUnits="userSpaceOnUse" x1="1533.9" y1="424.6" x2="1522.1" y2="383"><stop offset="0" stop-color="rgb(0,0,234)"/><stop offset="1" stop-color="rgb(0,0,255)"/></linearGradient><linearGradient id="q279" gradientUnits="userSpaceOnUse" x1="1220.1" y1="468.4" x2="1331.8" y2="265.8"><stop offset="0" stop-color="rgb(100,0,0)"/><stop offset="1" stop-color="rgb(166,0,0)"/></linearGradient><linearGradient id="q280" gradientUnits="userSpaceOnUse" x1="1220.1" y1="468.4" x2="1237.1" y2="530.6"><stop offset="0" stop-color="rgb(0,0,0)"/><stop offset="1" stop-color="rgb(0,36,0)"/></linearGradient><linearGradient id="q281" gradientUnits="userSpaceOnUse" x1="1621.4" y1="425.5" x2="1608.4" y2="372.7"><stop offset="0" stop-color="rgb(0,0,220)"/><stop offset="1" stop-color="rgb(0,0,255)"/></linearGradient><linearGradient id="q282" gradientUnits="userSpaceOnUse" x1="771.5" y1="462.6" x2="659.5" y2="384.5"><stop offset="0" stop-color="rgb(26,0,255)"/><stop offset="1" stop-color="rgb(184,58,194)"/></linearGradient><linearGradient id="q283" gradientUnits="userSpaceOnUse" x1="1108.4" y1="502.2" x2="1386.4" y2="486.8"><stop offset="0" stop-color="rgb(22,0,255)"/><stop offset="1" stop-color="rgb(131,2,253)"/></linearGradient><linearGradient id="q284" gradientUnits="userSpaceOnUse" x1="659.5" y1="384.5" x2="885.2" y2="432.8"><stop offset="0" stop-color="rgb(184,58,194)"/><stop offset="1" stop-color="rgb(108,0,255)"/></linearGradient><linearGradient id="q285" gradientUnits="userSpaceOnUse" x1="1386.4" y1="486.8" x2="1220.1" y2="468.4"><stop offset="0" stop-color="rgb(131,2,253)"/><stop offset="1" stop-color="rgb(100,0,255)"/></linearGradient><linearGradient id="q286" gradientUnits="userSpaceOnUse" x1="885.2" y1="432.8" x2="920.2" y2="360.8"><stop offset="0" stop-color="rgb(108,0,255)"/><stop offset="1" stop-color="rgb(185,58,194)"/></linearGradient><linearGradient id="q287" gradientUnits="userSpaceOnUse" x1="1220.1" y1="468.4" x2="1621.4" y2="425.5"><stop offset="0" stop-color="rgb(100,0,255)"/><stop offset="1" stop-color="rgb(166,36,220)"/></linearGradient></defs>
<g shape-rendering="crispEdges"><g style="isolation:isolate"><polygon points="884.9,433.1 920.1,360.5 977.3,371.9" fill="url(#q230)"/><polygon points="884.9,433.1 920.1,360.5 977.3,371.9" fill="url(#q231)" style="mix-blend-mode:screen"/><polygon points="884.9,433.1 920.1,360.5 977.3,371.9" fill="url(#q232)" style="mix-blend-mode:screen"/></g></g>
<path d="M885.2 432.8L920.2 360.8" stroke="url(#q286)" stroke-width="1.1"/>
<path d="M920.2 360.8L977 372" stroke="#9e9e9e" stroke-width="1.35"/>
<ellipse cx="920.2" cy="360.8" rx="2.9" ry="1.5" fill="#7b7bfa"/>
<g shape-rendering="crispEdges"><g style="isolation:isolate"><polygon points="884.8,432.9 977.1,371.7 1036.2,386.4" fill="url(#q233)"/><polygon points="884.8,432.9 977.1,371.7 1036.2,386.4" fill="url(#q234)" style="mix-blend-mode:screen"/><polygon points="884.8,432.9 977.1,371.7 1036.2,386.4" fill="url(#q235)" style="mix-blend-mode:screen"/></g></g>
<path d="M977 372L1035.9 386.5" stroke="#9e9e9e" stroke-width="1.35"/>
<ellipse cx="977" cy="372" rx="2.9" ry="1.5" fill="#7b7bfa"/>
<g shape-rendering="crispEdges"><g style="isolation:isolate"><polygon points="897.6,437.3 1097.4,399.1 1036.2,386.2" fill="url(#q239)"/><polygon points="897.6,437.3 1097.4,399.1 1036.2,386.2" fill="url(#q240)" style="mix-blend-mode:screen"/><polygon points="897.6,437.3 1097.4,399.1 1036.2,386.2" fill="url(#q241)" style="mix-blend-mode:screen"/></g></g>
<path d="M1035.9 386.5L1097.1 399.1" stroke="#9e9e9e" stroke-width="1.35"/>
<g shape-rendering="crispEdges"><g style="isolation:isolate"><polygon points="962.8,456.4 1161.2,410.6 1097.3,398.9" fill="url(#q248)"/><polygon points="962.8,456.4 1161.2,410.6 1097.3,398.9" fill="url(#q249)" style="mix-blend-mode:screen"/><polygon points="962.8,456.4 1161.2,410.6 1097.3,398.9" fill="url(#q250)" style="mix-blend-mode:screen"/></g></g>
<path d="M1097.1 399.1L1160.8 410.7" stroke="#9e9e9e" stroke-width="1.35"/>
<g shape-rendering="crispEdges"><g style="isolation:isolate"><polygon points="884.8,432.9 897.6,437.3 1036.2,386.3" fill="url(#q236)"/><polygon points="884.8,432.9 897.6,437.3 1036.2,386.3" fill="url(#q237)" style="mix-blend-mode:screen"/><polygon points="884.8,432.9 897.6,437.3 1036.2,386.3" fill="url(#q238)" style="mix-blend-mode:screen"/></g></g>
<ellipse cx="1035.9" cy="386.5" rx="3" ry="1.5" fill="#7b7bfa"/>
<g shape-rendering="crispEdges"><g style="isolation:isolate"><polygon points="897.6,437.2 929.9,446.4 1097.4,399.1" fill="url(#q242)"/><polygon points="897.6,437.2 929.9,446.4 1097.4,399.1" fill="url(#q243)" style="mix-blend-mode:screen"/><polygon points="897.6,437.2 929.9,446.4 1097.4,399.1" fill="url(#q244)" style="mix-blend-mode:screen"/></g></g>
<path d="M897.9 437.2L1097.1 399.1" stroke="#9e9e9e" stroke-width="1.35"/>
<g shape-rendering="crispEdges"><g style="isolation:isolate"><polygon points="1031,469.5 1228,419.1 1161.1,410.4" fill="url(#q255)"/><polygon points="1031,469.5 1228,419.1 1161.1,410.4" fill="url(#q256)" style="mix-blend-mode:screen"/></g></g>
<path d="M1160.8 410.7L1227.6 419.1" stroke="#9e9e9e" stroke-width="1.35"/>
<g shape-rendering="crispEdges"><g style="isolation:isolate"><polygon points="929.9,446.4 962.9,456.5 1097.4,399" fill="url(#q245)"/><polygon points="929.9,446.4 962.9,456.5 1097.4,399" fill="url(#q246)" style="mix-blend-mode:screen"/><polygon points="929.9,446.4 962.9,456.5 1097.4,399" fill="url(#q247)" style="mix-blend-mode:screen"/></g></g>
<ellipse cx="1097.1" cy="399.1" rx="3.1" ry="1.6" fill="#7b7bfa"/>
<g shape-rendering="crispEdges"><g style="isolation:isolate"><polygon points="659.2,384.4 717.5,401.1 885.5,432.9" fill="url(#q194)"/><polygon points="659.2,384.4 717.5,401.1 885.5,432.9" fill="url(#q195)" style="mix-blend-mode:screen"/><polygon points="659.2,384.4 717.5,401.1 885.5,432.9" fill="url(#q196)" style="mix-blend-mode:screen"/></g></g>
<path d="M659.5 384.5L885.2 432.8" stroke="url(#q284)" stroke-width="1.1"/>
<g shape-rendering="crispEdges"><g style="isolation:isolate"><polygon points="962.8,456.4 996.5,464.4 1161.2,410.6" fill="url(#q251)"/><polygon points="962.8,456.4 996.5,464.4 1161.2,410.6" fill="url(#q252)" style="mix-blend-mode:screen"/></g></g>
<path d="M963.2 456.3L1160.8 410.7" stroke="#9e9e9e" stroke-width="1.35"/>
<g shape-rendering="crispEdges"><g style="isolation:isolate"><polygon points="717.5,401 778.5,422.2 885.5,432.9" fill="url(#q197)"/><polygon points="717.5,401 778.5,422.2 885.5,432.9" fill="url(#q198)" style="mix-blend-mode:screen"/><polygon points="717.5,401 778.5,422.2 885.5,432.9" fill="url(#q199)" style="mix-blend-mode:screen"/></g></g>
<g shape-rendering="crispEdges"><g style="isolation:isolate"><polygon points="771.8,462.8 659.2,384.3 717.9,400.8" fill="url(#q160)"/><polygon points="771.8,462.8 659.2,384.3 717.9,400.8" fill="url(#q161)" style="mix-blend-mode:screen"/><polygon points="771.8,462.8 659.2,384.3 717.9,400.8" fill="url(#q162)" style="mix-blend-mode:screen"/></g></g>
<path d="M771.5 462.6L659.5 384.5" stroke="url(#q282)" stroke-width="1.1"/>
<path d="M659.5 384.5L717.9 401.1" stroke="#9e9e9e" stroke-width="1.35"/>
<ellipse cx="659.5" cy="384.5" rx="3.2" ry="1.7" fill="#7b7bfa"/>
<g shape-rendering="crispEdges"><g style="isolation:isolate"><polygon points="1102.8,477.4 1298.2,424.3 1227.8,418.9" fill="url(#q261)"/><polygon points="1102.8,477.4 1298.2,424.3 1227.8,418.9" fill="url(#q262)" style="mix-blend-mode:screen"/></g></g>
<path d="M1227.6 419.1L1297.9 424.4" stroke="#9e9e9e" stroke-width="1.35"/>
<g shape-rendering="crispEdges"><g style="isolation:isolate"><polygon points="996.5,464.4 1031.1,469.6 1161.2,410.5" fill="url(#q253)"/><polygon points="996.5,464.4 1031.1,469.6 1161.2,410.5" fill="url(#q254)" style="mix-blend-mode:screen"/></g></g>
<ellipse cx="1160.8" cy="410.7" rx="3.1" ry="1.6" fill="#7b7bfa"/>
<g shape-rendering="crispEdges"><g style="isolation:isolate"><polygon points="841.9,448.1 898.3,437.2 885.4,432.6" fill="url(#q203)"/><polygon points="841.9,448.1 898.3,437.2 885.4,432.6" fill="rgb(0,0,255)" style="mix-blend-mode:screen"/></g></g>
<path d="M885.2 432.8L897.9 437.2" stroke="#9e9e9e" stroke-width="1.35"/>
<g shape-rendering="crispEdges"><g style="isolation:isolate"><polygon points="778.5,422.1 842.4,448.3 885.5,432.8" fill="url(#q200)"/><polygon points="778.5,422.1 842.4,448.3 885.5,432.8" fill="url(#q201)" style="mix-blend-mode:screen"/><polygon points="778.5,422.1 842.4,448.3 885.5,432.8" fill="url(#q202)" style="mix-blend-mode:screen"/></g></g>
<ellipse cx="885.2" cy="432.8" rx="3.3" ry="1.7" fill="#7b7bfa"/>
<g shape-rendering="crispEdges"><g style="isolation:isolate"><polygon points="771.7,462.9 717.6,400.9 779.1,422" fill="url(#q163)"/><polygon points="771.7,462.9 717.6,400.9 779.1,422" fill="url(#q164)" style="mix-blend-mode:screen"/><polygon points="771.7,462.9 717.6,400.9 779.1,422" fill="url(#q165)" style="mix-blend-mode:screen"/></g></g>
<path d="M717.9 401.1L778.8 422.1" stroke="#9e9e9e" stroke-width="1.35"/>
<ellipse cx="717.9" cy="401.1" rx="3.3" ry="1.7" fill="#7b7bfa"/>
<g shape-rendering="crispEdges"><g style="isolation:isolate"><polygon points="841.9,448.1 898.2,437 930.6,446.3" fill="url(#q204)"/><polygon points="841.9,448.1 898.2,437 930.6,446.3" fill="rgb(0,0,255)" style="mix-blend-mode:screen"/></g></g>
<path d="M897.9 437.2L930.2 446.3" stroke="#9e9e9e" stroke-width="1.35"/>
<path d="M842.3 448L897.9 437.2" stroke="#9e9e9e" stroke-width="1.35"/>
<ellipse cx="897.9" cy="437.2" rx="3.3" ry="1.7" fill="#7b7bfa"/>
<g shape-rendering="crispEdges"><g style="isolation:isolate"><polygon points="1031,469.4 1066.4,474.6 1228,419" fill="url(#q257)"/><polygon points="1031,469.4 1066.4,474.6 1228,419" fill="url(#q258)" style="mix-blend-mode:screen"/></g></g>
<path d="M1031.3 469.4L1227.6 419.1" stroke="#9e9e9e" stroke-width="1.35"/>
<g shape-rendering="crispEdges"><g style="isolation:isolate"><polygon points="784.5,473.3 842.6,448 778.6,421.9" fill="url(#q169)"/><polygon points="784.5,473.3 842.6,448 778.6,421.9" fill="url(#q170)" style="mix-blend-mode:screen"/><polygon points="784.5,473.3 842.6,448 778.6,421.9" fill="url(#q171)" style="mix-blend-mode:screen"/></g></g>
<path d="M778.8 422.1L842.3 448" stroke="#9e9e9e" stroke-width="1.35"/>
<g shape-rendering="crispEdges"><g style="isolation:isolate"><polygon points="907.7,470.7 963.5,456.3 930.1,446" fill="url(#q207)"/><polygon points="907.7,470.7 963.5,456.3 930.1,446" fill="url(#q208)" style="mix-blend-mode:screen"/></g></g>
<path d="M930.2 446.3L963.2 456.3" stroke="#9e9e9e" stroke-width="1.35"/>
<g shape-rendering="crispEdges"><g style="isolation:isolate"><polygon points="1066.4,474.5 1102.8,477.5 1227.9,419" fill="url(#q259)"/><polygon points="1066.4,474.5 1102.8,477.5 1227.9,419" fill="url(#q260)" style="mix-blend-mode:screen"/></g></g>
<ellipse cx="1227.6" cy="419.1" rx="3.2" ry="1.6" fill="#7b7bfa"/>
<g shape-rendering="crispEdges"><g style="isolation:isolate"><polygon points="841.9,448 908.2,470.8 930.5,446.2" fill="url(#q205)"/><polygon points="841.9,448 908.2,470.8 930.5,446.2" fill="url(#q206)" style="mix-blend-mode:screen"/></g></g>
<ellipse cx="930.2" cy="446.3" rx="3.4" ry="1.7" fill="#7b7bfa"/>
<g shape-rendering="crispEdges"><g style="isolation:isolate"><polygon points="1179.6,470.3 1372.7,424.3 1298.1,424.1" fill="url(#q267)"/><polygon points="1179.6,470.3 1372.7,424.3 1298.1,424.1" fill="url(#q268)" style="mix-blend-mode:screen"/><polygon points="1179.6,470.3 1372.7,424.3 1298.1,424.1" fill="url(#q269)" style="mix-blend-mode:screen"/></g></g>
<path d="M1297.9 424.4L1372.4 424.4" stroke="#9e9e9e" stroke-width="1.35"/>
<g shape-rendering="crispEdges"><g style="isolation:isolate"><polygon points="771.3,462.9 784.8,473.4 778.8,421.8" fill="url(#q166)"/><polygon points="771.3,462.9 784.8,473.4 778.8,421.8" fill="url(#q167)" style="mix-blend-mode:screen"/><polygon points="771.3,462.9 784.8,473.4 778.8,421.8" fill="url(#q168)" style="mix-blend-mode:screen"/></g></g>
<ellipse cx="778.8" cy="422.1" rx="3.4" ry="1.7" fill="#7b7bfa"/>
<g shape-rendering="crispEdges"><g style="isolation:isolate"><polygon points="907.6,470.6 963.4,456.1 997.2,464.3" fill="url(#q209)"/><polygon points="907.6,470.6 963.4,456.1 997.2,464.3" fill="url(#q210)" style="mix-blend-mode:screen"/></g></g>
<path d="M963.2 456.3L996.8 464.3" stroke="#9e9e9e" stroke-width="1.35"/>
<path d="M908 470.5L963.2 456.3" stroke="#9e9e9e" stroke-width="1.35"/>
<ellipse cx="963.2" cy="456.3" rx="3.4" ry="1.7" fill="#7b7bfa"/>
<g shape-rendering="crispEdges"><g style="isolation:isolate"><polygon points="784.4,473.1 817,475.7 842.6,447.8" fill="url(#q172)"/><polygon points="784.4,473.1 817,475.7 842.6,447.8" fill="url(#q173)" style="mix-blend-mode:screen"/></g></g>
<path d="M784.7 473.1L842.3 448" stroke="#9e9e9e" stroke-width="1.35"/>
<g shape-rendering="crispEdges"><g style="isolation:isolate"><polygon points="1102.8,477.4 1140.3,478.6 1298.2,424.3" fill="url(#q263)"/><polygon points="1102.8,477.4 1140.3,478.6 1298.2,424.3" fill="url(#q264)" style="mix-blend-mode:screen"/></g></g>
<path d="M1103.1 477.3L1297.9 424.4" stroke="#9e9e9e" stroke-width="1.35"/>
<g shape-rendering="crispEdges"><g style="isolation:isolate"><polygon points="850,488.8 908.3,470.5 842,447.8" fill="url(#q176)"/><polygon points="850,488.8 908.3,470.5 842,447.8" fill="url(#q177)" style="mix-blend-mode:screen"/></g></g>
<path d="M842.3 448L908 470.5" stroke="#9e9e9e" stroke-width="1.35"/>
<g shape-rendering="crispEdges"><g style="isolation:isolate"><polygon points="907.6,470.5 976.7,485.4 997.2,464.2" fill="url(#q211)"/><polygon points="907.6,470.5 976.7,485.4 997.2,464.2" fill="url(#q212)" style="mix-blend-mode:screen"/></g></g>
<g shape-rendering="crispEdges"><g style="isolation:isolate"><polygon points="976.1,485.4 1031.7,469.3 996.7,464" fill="url(#q213)"/><polygon points="976.1,485.4 1031.7,469.3 996.7,464" fill="url(#q214)" style="mix-blend-mode:screen"/></g></g>
<path d="M996.8 464.3L1031.3 469.4" stroke="#9e9e9e" stroke-width="1.35"/>
<ellipse cx="996.8" cy="464.3" rx="3.4" ry="1.8" fill="#7b7bfa"/>
<g shape-rendering="crispEdges"><g style="isolation:isolate"><polygon points="816.5,475.4 850.5,488.8 842.3,447.7" fill="url(#q174)"/><polygon points="816.5,475.4 850.5,488.8 842.3,447.7" fill="url(#q175)" style="mix-blend-mode:screen"/></g></g>
<ellipse cx="842.3" cy="448" rx="3.4" ry="1.8" fill="#7b7bfa"/>
<g shape-rendering="crispEdges"><g style="isolation:isolate"><polygon points="1219.7,468.4 1372.7,424.2 1451.5,423.1" fill="url(#q273)"/><polygon points="1219.7,468.4 1372.7,424.2 1451.5,423.1" fill="url(#q274)" style="mix-blend-mode:screen"/><polygon points="1219.7,468.4 1372.7,424.2 1451.5,423.1" fill="url(#q275)" style="mix-blend-mode:screen"/></g></g>
<path d="M1372.4 424.4L1451.2 423.1" stroke="#9e9e9e" stroke-width="1.35"/>
<g shape-rendering="crispEdges"><g style="isolation:isolate"><polygon points="723.1,479.6 785.1,473.1 771.8,462.4" fill="url(#q132)"/><polygon points="723.1,479.6 785.1,473.1 771.8,462.4" fill="url(#q133)" style="mix-blend-mode:screen"/></g></g>
<path d="M771.5 462.6L784.7 473.1" stroke="#9e9e9e" stroke-width="1.35"/>
<g shape-rendering="crispEdges"><g style="isolation:isolate"><polygon points="1140.2,478.6 1179.6,470.4 1298.2,424.3" fill="url(#q265)"/><polygon points="1140.2,478.6 1179.6,470.4 1298.2,424.3" fill="url(#q266)" style="mix-blend-mode:screen"/></g></g>
<ellipse cx="1297.9" cy="424.4" rx="3.3" ry="1.7" fill="#7b7bfa"/>
<g shape-rendering="crispEdges"><g style="isolation:isolate"><polygon points="976.1,485.3 1031.6,469.1 1067.1,474.4" fill="rgb(0,0,0)"/><polygon points="976.1,485.3 1031.6,469.1 1067.1,474.4" fill="url(#q215)" style="mix-blend-mode:screen"/></g></g>
<path d="M1031.3 469.4L1066.7 474.4" stroke="#9e9e9e" stroke-width="1.35"/>
<path d="M976.4 485.2L1031.3 469.4" stroke="#9e9e9e" stroke-width="1.35"/>
<ellipse cx="1031.3" cy="469.4" rx="3.5" ry="1.8" fill="#7b7bfa"/>
<g shape-rendering="crispEdges"><g style="isolation:isolate"><polygon points="710.2,476.3 723.1,479.7 771.8,462.5" fill="url(#q130)"/><polygon points="710.2,476.3 723.1,479.7 771.8,462.5" fill="url(#q131)" style="mix-blend-mode:screen"/></g></g>
<path d="M710.6 476.2L771.5 462.6" stroke="#9e9e9e" stroke-width="1.35"/>
<ellipse cx="771.5" cy="462.6" rx="3.5" ry="1.8" fill="#7b7bfa"/>
<g shape-rendering="crispEdges"><g style="isolation:isolate"><polygon points="756.1,493.8 817.2,475.3 784.7,472.7" fill="rgb(0,0,0)"/><polygon points="756.1,493.8 817.2,475.3 784.7,472.7" fill="url(#q135)" style="mix-blend-mode:screen"/></g></g>
<path d="M784.7 473.1L816.9 475.3" stroke="#9e9e9e" stroke-width="1.35"/>
<g shape-rendering="crispEdges"><g style="isolation:isolate"><polygon points="849.9,488.5 884.4,500 908.3,470.3" fill="rgb(0,0,0)"/><polygon points="849.9,488.5 884.4,500 908.3,470.3" fill="url(#q178)" style="mix-blend-mode:screen"/></g></g>
<path d="M850.3 488.5L908 470.5" stroke="#9e9e9e" stroke-width="1.35"/>
<g shape-rendering="crispEdges"><g style="isolation:isolate"><polygon points="723,479.5 756.4,494 785.1,473" fill="rgb(0,0,0)"/><polygon points="723,479.5 756.4,494 785.1,473" fill="url(#q134)" style="mix-blend-mode:screen"/></g></g>
<path d="M723.4 479.5L784.7 473.1" stroke="#9e9e9e" stroke-width="1.35"/>
<ellipse cx="784.7" cy="473.1" rx="3.5" ry="1.8" fill="#7b7bfa"/>
<g shape-rendering="crispEdges"><g style="isolation:isolate"><polygon points="918.7,508.8 976.8,485.2 907.7,470.3" fill="rgb(0,0,0)"/><polygon points="918.7,508.8 976.8,485.2 907.7,470.3" fill="url(#q179)" style="mix-blend-mode:screen"/></g></g>
<path d="M908 470.5L976.4 485.2" stroke="#9e9e9e" stroke-width="1.35"/>
<g shape-rendering="crispEdges"><g style="isolation:isolate"><polygon points="1219.7,468.4 1451.5,423 1534.2,424.5" fill="url(#q276)"/><polygon points="1219.7,468.4 1451.5,423 1534.2,424.5" fill="url(#q277)" style="mix-blend-mode:screen"/><polygon points="1219.7,468.4 1451.5,423 1534.2,424.5" fill="url(#q278)" style="mix-blend-mode:screen"/></g></g>
<path d="M1451.2 423.1L1533.9 424.6" stroke="#9e9e9e" stroke-width="1.35"/>
<ellipse cx="1451.2" cy="423.1" rx="3.4" ry="1.8" fill="#7b7bfa"/>
<g shape-rendering="crispEdges"><g style="isolation:isolate"><polygon points="883.9,499.8 919.2,508.7 908,470.2" fill="rgb(0,0,0)"/><polygon points="883.9,499.8 919.2,508.7 908,470.2" fill="rgb(0,0,251)" style="mix-blend-mode:screen"/></g></g>
<ellipse cx="908" cy="470.5" rx="3.5" ry="1.8" fill="#7b7bfa"/>
<g shape-rendering="crispEdges"><g style="isolation:isolate"><polygon points="789.8,510.6 850.6,488.5 816.8,475" fill="rgb(0,0,0)"/><polygon points="789.8,510.6 850.6,488.5 816.8,475" fill="url(#q137)" style="mix-blend-mode:screen"/></g></g>
<path d="M816.9 475.3L850.3 488.5" stroke="#9e9e9e" stroke-width="1.35"/>
<g shape-rendering="crispEdges"><g style="isolation:isolate"><polygon points="976.1,485.2 1048.8,490.8 1067.1,474.3" fill="rgb(0,0,0)"/><polygon points="976.1,485.2 1048.8,490.8 1067.1,474.3" fill="url(#q216)" style="mix-blend-mode:screen"/></g></g>
<g shape-rendering="crispEdges"><g style="isolation:isolate"><polygon points="1179.6,470.3 1219.7,468.5 1372.7,424.3" fill="url(#q270)"/><polygon points="1179.6,470.3 1219.7,468.5 1372.7,424.3" fill="url(#q271)" style="mix-blend-mode:screen"/><polygon points="1179.6,470.3 1219.7,468.5 1372.7,424.3" fill="url(#q272)" style="mix-blend-mode:screen"/></g></g>
<path d="M1179.9 470.2L1372.4 424.4" stroke="#9e9e9e" stroke-width="1.35"/>
<ellipse cx="1372.4" cy="424.4" rx="3.4" ry="1.7" fill="#7b7bfa"/>
<g shape-rendering="crispEdges"><g style="isolation:isolate"><polygon points="1048.2,490.8 1103.4,477.2 1066.5,474.2" fill="rgb(0,0,0)"/><polygon points="1048.2,490.8 1103.4,477.2 1066.5,474.2" fill="url(#q217)" style="mix-blend-mode:screen"/></g></g>
<path d="M1066.7 474.4L1103.1 477.3" stroke="#9e9e9e" stroke-width="1.35"/>
<ellipse cx="1066.7" cy="474.4" rx="3.5" ry="1.8" fill="#7b7bfa"/>
<g shape-rendering="crispEdges"><g style="isolation:isolate"><polygon points="756,493.7 790.2,510.7 817.2,475.1" fill="rgb(0,0,0)"/><polygon points="756,493.7 790.2,510.7 817.2,475.1" fill="url(#q136)" style="mix-blend-mode:screen"/></g></g>
<path d="M756.4 493.7L816.9 475.3" stroke="#9e9e9e" stroke-width="1.35"/>
<ellipse cx="816.9" cy="475.3" rx="3.5" ry="1.8" fill="#7b7bfa"/>
<g shape-rendering="crispEdges"><g style="isolation:isolate"><polygon points="659.5,496.9 723.7,479.5 710.9,476" fill="rgb(0,0,0)"/><polygon points="659.5,496.9 723.7,479.5 710.9,476" fill="url(#q103)" style="mix-blend-mode:screen"/></g></g>
<path d="M710.6 476.2L723.4 479.5" stroke="#9e9e9e" stroke-width="1.35"/>
<g shape-rendering="crispEdges"><g style="isolation:isolate"><polygon points="824,525 884.6,499.6 850.2,488.2" fill="rgb(0,0,0)"/><polygon points="824,525 884.6,499.6 850.2,488.2" fill="url(#q139)" style="mix-blend-mode:screen"/></g></g>
<path d="M850.3 488.5L884.3 499.7" stroke="#9e9e9e" stroke-width="1.35"/>
<g shape-rendering="crispEdges"><g style="isolation:isolate"><polygon points="1048.2,490.7 1103.4,477.1 1140.9,478.5" fill="url(#q218)"/><polygon points="1048.2,490.7 1103.4,477.1 1140.9,478.5" fill="url(#q219)" style="mix-blend-mode:screen"/></g></g>
<path d="M1103.1 477.3L1140.6 478.5" stroke="#9e9e9e" stroke-width="1.35"/>
<path d="M1048.5 490.7L1103.1 477.3" stroke="#9e9e9e" stroke-width="1.35"/>
<ellipse cx="1103.1" cy="477.3" rx="3.6" ry="1.8" fill="#7b7bfa"/>
<g shape-rendering="crispEdges"><g style="isolation:isolate"><polygon points="693.2,517.1 756.7,493.6 723.4,479.2" fill="rgb(0,0,0)"/><polygon points="693.2,517.1 756.7,493.6 723.4,479.2" fill="url(#q105)" style="mix-blend-mode:screen"/></g></g>
<path d="M723.4 479.5L756.4 493.7" stroke="#9e9e9e" stroke-width="1.35"/>
<g shape-rendering="crispEdges"><g style="isolation:isolate"><polygon points="645.1,478.9 659.5,497 710.9,476.2" fill="url(#q101)"/><polygon points="645.1,478.9 659.5,497 710.9,476.2" fill="url(#q102)" style="mix-blend-mode:screen"/></g></g>
<path d="M645.4 479L710.6 476.2" stroke="#9e9e9e" stroke-width="1.35"/>
<ellipse cx="710.6" cy="476.2" rx="3.6" ry="1.8" fill="#7b7bfa"/>
<g shape-rendering="crispEdges"><g style="isolation:isolate"><polygon points="789.8,510.4 824.4,525.1 850.6,488.3" fill="rgb(0,0,0)"/><polygon points="789.8,510.4 824.4,525.1 850.6,488.3" fill="url(#q138)" style="mix-blend-mode:screen"/></g></g>
<path d="M790.1 510.4L850.3 488.5" stroke="#9e9e9e" stroke-width="1.35"/>
<ellipse cx="850.3" cy="488.5" rx="3.6" ry="1.8" fill="#7b7bfa"/>
<g shape-rendering="crispEdges"><g style="isolation:isolate"><polygon points="918.6,508.5 954.6,512.5 976.7,485" fill="rgb(0,0,0)"/><polygon points="918.6,508.5 954.6,512.5 976.7,485" fill="url(#q180)" style="mix-blend-mode:screen"/></g></g>
<path d="M919 508.5L976.4 485.2" stroke="#9e9e9e" stroke-width="1.35"/>
<g shape-rendering="crispEdges"><g style="isolation:isolate"><polygon points="659.4,496.7 693.5,517.3 723.7,479.3" fill="rgb(0,0,0)"/><polygon points="659.4,496.7 693.5,517.3 723.7,479.3" fill="url(#q104)" style="mix-blend-mode:screen"/></g></g>
<path d="M659.8 496.7L723.4 479.5" stroke="#9e9e9e" stroke-width="1.35"/>
<ellipse cx="723.4" cy="479.5" rx="3.6" ry="1.8" fill="#7b7bfa"/>
<g shape-rendering="crispEdges"><g style="isolation:isolate"><polygon points="1219.7,468.4 1534.2,424.5 1621.8,425.5" fill="url(#q279)"/><polygon points="1219.7,468.4 1534.2,424.5 1621.8,425.5" fill="url(#q280)" style="mix-blend-mode:screen"/><polygon points="1219.7,468.4 1534.2,424.5 1621.8,425.5" fill="url(#q281)" style="mix-blend-mode:screen"/></g></g>
<path d="M1220.1 468.4L1621.4 425.5" stroke="url(#q287)" stroke-width="1.1"/>
<path d="M1533.9 424.6L1621.4 425.5" stroke="#9e9e9e" stroke-width="1.35"/>
<ellipse cx="1533.9" cy="424.6" rx="3.5" ry="1.8" fill="#7b7bfa"/>
<ellipse cx="1621.4" cy="425.5" rx="3.6" ry="1.9" fill="#7b7bfa"/>
<g shape-rendering="crispEdges"><g style="isolation:isolate"><polygon points="727.7,541.8 790.5,510.3 756.3,493.3" fill="rgb(0,0,0)"/><polygon points="727.7,541.8 790.5,510.3 756.3,493.3" fill="url(#q108)" style="mix-blend-mode:screen"/><polygon points="727.7,541.8 790.5,510.3 756.3,493.3" fill="url(#q109)" style="mix-blend-mode:screen"/></g></g>
<path d="M756.4 493.7L790.1 510.4" stroke="#9e9e9e" stroke-width="1.35"/>
<g shape-rendering="crispEdges"><g style="isolation:isolate"><polygon points="858.8,535.6 919.3,508.4 884.2,499.3" fill="rgb(0,0,0)"/><polygon points="858.8,535.6 919.3,508.4 884.2,499.3" fill="url(#q142)" style="mix-blend-mode:screen"/><polygon points="858.8,535.6 919.3,508.4 884.2,499.3" fill="url(#q143)" style="mix-blend-mode:screen"/></g></g>
<path d="M884.3 499.7L919 508.5" stroke="#9e9e9e" stroke-width="1.35"/>
<g shape-rendering="crispEdges"><g style="isolation:isolate"><polygon points="990.8,513.6 1048.9,490.6 976.1,485.1" fill="rgb(0,0,0)"/><polygon points="990.8,513.6 1048.9,490.6 976.1,485.1" fill="url(#q182)" style="mix-blend-mode:screen"/></g></g>
<path d="M976.4 485.2L1048.5 490.7" stroke="#9e9e9e" stroke-width="1.35"/>
<g shape-rendering="crispEdges"><g style="isolation:isolate"><polygon points="824,524.8 859.2,535.7 884.6,499.5" fill="rgb(0,0,0)"/><polygon points="824,524.8 859.2,535.7 884.6,499.5" fill="url(#q140)" style="mix-blend-mode:screen"/><polygon points="824,524.8 859.2,535.7 884.6,499.5" fill="url(#q141)" style="mix-blend-mode:screen"/></g></g>
<path d="M824.3 524.8L884.3 499.7" stroke="#9e9e9e" stroke-width="1.35"/>
<ellipse cx="884.3" cy="499.7" rx="3.6" ry="1.8" fill="#7b7bfa"/>
<g shape-rendering="crispEdges"><g style="isolation:isolate"><polygon points="954.2,512.3 991.3,513.5 976.5,484.9" fill="rgb(0,0,0)"/><polygon points="954.2,512.3 991.3,513.5 976.5,484.9" fill="url(#q181)" style="mix-blend-mode:screen"/></g></g>
<ellipse cx="976.4" cy="485.2" rx="3.6" ry="1.8" fill="#7b7bfa"/>
<g shape-rendering="crispEdges"><g style="isolation:isolate"><polygon points="693.1,517 728,541.9 756.6,493.4" fill="rgb(0,0,0)"/><polygon points="693.1,517 728,541.9 756.6,493.4" fill="url(#q106)" style="mix-blend-mode:screen"/><polygon points="693.1,517 728,541.9 756.6,493.4" fill="url(#q107)" style="mix-blend-mode:screen"/></g></g>
<path d="M693.4 517L756.4 493.7" stroke="#9e9e9e" stroke-width="1.35"/>
<ellipse cx="756.4" cy="493.7" rx="3.6" ry="1.9" fill="#7b7bfa"/>
<g shape-rendering="crispEdges"><g style="isolation:isolate"><polygon points="762.3,561.5 824.7,524.7 790.1,510" fill="rgb(0,0,0)"/><polygon points="762.3,561.5 824.7,524.7 790.1,510" fill="url(#q112)" style="mix-blend-mode:screen"/><polygon points="762.3,561.5 824.7,524.7 790.1,510" fill="url(#q113)" style="mix-blend-mode:screen"/></g></g>
<path d="M790.1 510.4L824.3 524.8" stroke="#9e9e9e" stroke-width="1.35"/>
<g shape-rendering="crispEdges"><g style="isolation:isolate"><polygon points="593.1,517.2 660.1,496.7 645.6,478.7" fill="url(#q57)"/><polygon points="593.1,517.2 660.1,496.7 645.6,478.7" fill="url(#q58)" style="mix-blend-mode:screen"/></g></g>
<path d="M645.4 479L659.8 496.7" stroke="#9e9e9e" stroke-width="1.35"/>
<g shape-rendering="crispEdges"><g style="isolation:isolate"><polygon points="1048.2,490.7 1125.6,487.5 1140.9,478.4" fill="url(#q220)"/><polygon points="1048.2,490.7 1125.6,487.5 1140.9,478.4" fill="url(#q221)" style="mix-blend-mode:screen"/></g></g>
<g shape-rendering="crispEdges"><g style="isolation:isolate"><polygon points="649.8,786.7 686.5,835.3 700.9,623.5" fill="url(#q19)"/><polygon points="649.8,786.7 686.5,835.3 700.9,623.5" fill="url(#q20)" style="mix-blend-mode:screen"/><polygon points="649.8,786.7 686.5,835.3 700.9,623.5" fill="url(#q21)" style="mix-blend-mode:screen"/></g></g>
<path d="M650.1 786.5L686.4 835" stroke="#9e9e9e" stroke-width="1.35"/>
<g shape-rendering="crispEdges"><g style="isolation:isolate"><polygon points="727.6,541.6 762.6,561.6 790.4,510.1" fill="rgb(0,0,0)"/><polygon points="727.6,541.6 762.6,561.6 790.4,510.1" fill="url(#q110)" style="mix-blend-mode:screen"/><polygon points="727.6,541.6 762.6,561.6 790.4,510.1" fill="url(#q111)" style="mix-blend-mode:screen"/></g></g>
<path d="M728 541.6L790.1 510.4" stroke="#9e9e9e" stroke-width="1.35"/>
<ellipse cx="790.1" cy="510.4" rx="3.6" ry="1.9" fill="#7b7bfa"/>
<g shape-rendering="crispEdges"><g style="isolation:isolate"><polygon points="628.9,553.6 693.8,516.9 659.8,496.4" fill="rgb(0,0,0)"/><polygon points="628.9,553.6 693.8,516.9 659.8,496.4" fill="url(#q61)" style="mix-blend-mode:screen"/><polygon points="628.9,553.6 693.8,516.9 659.8,496.4" fill="url(#q62)" style="mix-blend-mode:screen"/></g></g>
<path d="M659.8 496.7L693.4 517" stroke="#9e9e9e" stroke-width="1.35"/>
<g shape-rendering="crispEdges"><g style="isolation:isolate"><polygon points="1125,487.6 1180.3,470.1 1140.2,478.5" fill="url(#q222)"/><polygon points="1125,487.6 1180.3,470.1 1140.2,478.5" fill="url(#q223)" style="mix-blend-mode:screen"/></g></g>
<path d="M1140.6 478.5L1179.9 470.2" stroke="#9e9e9e" stroke-width="1.35"/>
<ellipse cx="1140.6" cy="478.5" rx="3.6" ry="1.9" fill="#7b7bfa"/>
<g shape-rendering="crispEdges"><g style="isolation:isolate"><polygon points="894.2,539.3 954.8,512.1 918.9,508.1" fill="rgb(0,0,0)"/><polygon points="894.2,539.3 954.8,512.1 918.9,508.1" fill="url(#q146)" style="mix-blend-mode:screen"/><polygon points="894.2,539.3 954.8,512.1 918.9,508.1" fill="url(#q147)" style="mix-blend-mode:screen"/></g></g>
<path d="M919 508.5L954.5 512.2" stroke="#9e9e9e" stroke-width="1.35"/>
<g shape-rendering="crispEdges"><g style="isolation:isolate"><polygon points="609.5,710.3 650.1,786.8 665.2,590.3" fill="url(#q13)"/><polygon points="609.5,710.3 650.1,786.8 665.2,590.3" fill="url(#q14)" style="mix-blend-mode:screen"/><polygon points="609.5,710.3 650.1,786.8 665.2,590.3" fill="url(#q15)" style="mix-blend-mode:screen"/></g></g>
<path d="M609.8 710.2L650.1 786.5" stroke="#9e9e9e" stroke-width="1.35"/>
<g shape-rendering="crispEdges"><g style="isolation:isolate"><polygon points="686.3,835.3 719.9,854.4 735.9,644.7" fill="url(#q25)"/><polygon points="686.3,835.3 719.9,854.4 735.9,644.7" fill="url(#q26)" style="mix-blend-mode:screen"/><polygon points="686.3,835.3 719.9,854.4 735.9,644.7" fill="url(#q27)" style="mix-blend-mode:screen"/></g></g>
<path d="M686.4 835L719.8 854" stroke="#9e9e9e" stroke-width="1.35"/>
<g shape-rendering="crispEdges"><g style="isolation:isolate"><polygon points="858.8,535.5 894.6,539.5 919.2,508.3" fill="rgb(0,0,0)"/><polygon points="858.8,535.5 894.6,539.5 919.2,508.3" fill="url(#q144)" style="mix-blend-mode:screen"/><polygon points="858.8,535.5 894.6,539.5 919.2,508.3" fill="url(#q145)" style="mix-blend-mode:screen"/></g></g>
<path d="M859.1 535.4L919 508.5" stroke="#9e9e9e" stroke-width="1.35"/>
<ellipse cx="919" cy="508.5" rx="3.6" ry="1.9" fill="#7b7bfa"/>
<g shape-rendering="crispEdges"><g style="isolation:isolate"><polygon points="578.7,501.9 593.2,517.3 645.7,478.8" fill="url(#q55)"/><polygon points="578.7,501.9 593.2,517.3 645.7,478.8" fill="url(#q56)" style="mix-blend-mode:screen"/></g></g>
<path d="M579.1 501.8L645.4 479" stroke="#9e9e9e" stroke-width="1.35"/>
<ellipse cx="645.4" cy="479" rx="3.7" ry="1.9" fill="#7b7bfa"/>
<g shape-rendering="crispEdges"><g style="isolation:isolate"><polygon points="593.1,517 629.2,553.7 660.1,496.5" fill="rgb(0,0,0)"/><polygon points="593.1,517 629.2,553.7 660.1,496.5" fill="url(#q59)" style="mix-blend-mode:screen"/><polygon points="593.1,517 629.2,553.7 660.1,496.5" fill="url(#q60)" style="mix-blend-mode:screen"/></g></g>
<path d="M593.4 517L659.8 496.7" stroke="#9e9e9e" stroke-width="1.35"/>
<ellipse cx="659.8" cy="496.7" rx="3.7" ry="1.9" fill="#7b7bfa"/>
<g shape-rendering="crispEdges"><g style="isolation:isolate"><polygon points="664.9,590.9 728.3,541.5 693.4,516.6" fill="rgb(0,0,0)"/><polygon points="664.9,590.9 728.3,541.5 693.4,516.6" fill="url(#q65)" style="mix-blend-mode:screen"/><polygon points="664.9,590.9 728.3,541.5 693.4,516.6" fill="url(#q66)" style="mix-blend-mode:screen"/></g></g>
<path d="M693.4 517L728 541.6" stroke="#9e9e9e" stroke-width="1.35"/>
<g shape-rendering="crispEdges"><g style="isolation:isolate"><polygon points="796.9,572.3 859.4,535.3 824.3,524.4" fill="rgb(0,0,0)"/><polygon points="796.9,572.3 859.4,535.3 824.3,524.4" fill="url(#q115)" style="mix-blend-mode:screen"/><polygon points="796.9,572.3 859.4,535.3 824.3,524.4" fill="rgb(0,0,255)" style="mix-blend-mode:screen"/></g></g>
<path d="M824.3 524.8L859.1 535.4" stroke="#9e9e9e" stroke-width="1.35"/>
<g shape-rendering="crispEdges"><g style="isolation:isolate"><polygon points="650,786.8 701.1,623.5 665.1,590.2" fill="url(#q16)"/><polygon points="650,786.8 701.1,623.5 665.1,590.2" fill="url(#q17)" style="mix-blend-mode:screen"/><polygon points="650,786.8 701.1,623.5 665.1,590.2" fill="url(#q18)" style="mix-blend-mode:screen"/></g></g>
<path d="M650.1 786.5L700.9 623.8" stroke="#9e9e9e" stroke-width="1.35"/>
<ellipse cx="650.1" cy="786.5" rx="3.7" ry="1.9" fill="#7b7bfa"/>
<g shape-rendering="crispEdges"><g style="isolation:isolate"><polygon points="628.8,553.4 665.2,590.9 693.7,516.7" fill="rgb(0,0,0)"/><polygon points="628.8,553.4 665.2,590.9 693.7,516.7" fill="url(#q63)" style="mix-blend-mode:screen"/><polygon points="628.8,553.4 665.2,590.9 693.7,516.7" fill="url(#q64)" style="mix-blend-mode:screen"/></g></g>
<path d="M629.2 553.4L693.4 517" stroke="#9e9e9e" stroke-width="1.35"/>
<ellipse cx="693.4" cy="517" rx="3.7" ry="1.9" fill="#7b7bfa"/>
<g shape-rendering="crispEdges"><g style="isolation:isolate"><polygon points="762.2,561.3 797.2,572.4 824.6,524.6" fill="rgb(0,0,0)"/><polygon points="762.2,561.3 797.2,572.4 824.6,524.6" fill="url(#q114)" style="mix-blend-mode:screen"/><polygon points="762.2,561.3 797.2,572.4 824.6,524.6" fill="rgb(0,0,254)" style="mix-blend-mode:screen"/></g></g>
<path d="M762.5 561.2L824.3 524.8" stroke="#9e9e9e" stroke-width="1.35"/>
<ellipse cx="824.3" cy="524.8" rx="3.7" ry="1.9" fill="#7b7bfa"/>
<g shape-rendering="crispEdges"><g style="isolation:isolate"><polygon points="686.4,835.3 736,644.8 700.8,623.5" fill="url(#q22)"/><polygon points="686.4,835.3 736,644.8 700.8,623.5" fill="url(#q23)" style="mix-blend-mode:screen"/><polygon points="686.4,835.3 736,644.8 700.8,623.5" fill="url(#q24)" style="mix-blend-mode:screen"/></g></g>
<path d="M686.4 835L735.8 645.1" stroke="#9e9e9e" stroke-width="1.35"/>
<ellipse cx="686.4" cy="835" rx="3.7" ry="1.9" fill="#7b7bfa"/>
<g shape-rendering="crispEdges"><g style="isolation:isolate"><polygon points="609.7,710.5 665.4,590.4 629.1,553" fill="rgb(0,0,0)"/><polygon points="609.7,710.5 665.4,590.4 629.1,553" fill="url(#q11)" style="mix-blend-mode:screen"/><polygon points="609.7,710.5 665.4,590.4 629.1,553" fill="url(#q12)" style="mix-blend-mode:screen"/></g></g>
<path d="M629.2 553.4L665.1 590.6" stroke="#9e9e9e" stroke-width="1.35"/>
<path d="M609.8 710.2L665.1 590.6" stroke="#9e9e9e" stroke-width="1.35"/>
<g shape-rendering="crispEdges"><g style="isolation:isolate"><polygon points="700.7,624.1 762.9,561.1 727.9,541.2" fill="rgb(0,0,0)"/><polygon points="700.7,624.1 762.9,561.1 727.9,541.2" fill="url(#q69)" style="mix-blend-mode:screen"/><polygon points="700.7,624.1 762.9,561.1 727.9,541.2" fill="rgb(0,0,255)" style="mix-blend-mode:screen"/></g></g>
<path d="M728 541.6L762.5 561.2" stroke="#9e9e9e" stroke-width="1.35"/>
<g shape-rendering="crispEdges"><g style="isolation:isolate"><polygon points="990.7,513.5 1029.2,508.6 1048.8,490.5" fill="rgb(0,0,0)"/><polygon points="990.7,513.5 1029.2,508.6 1048.8,490.5" fill="url(#q183)" style="mix-blend-mode:screen"/></g></g>
<path d="M991 513.4L1048.5 490.7" stroke="#9e9e9e" stroke-width="1.35"/>
<g shape-rendering="crispEdges"><g style="isolation:isolate"><polygon points="1125,487.6 1180.2,470 1220.4,468.3" fill="url(#q224)"/><polygon points="1125,487.6 1180.2,470 1220.4,468.3" fill="rgb(0,0,255)" style="mix-blend-mode:screen"/></g></g>
<path d="M1179.9 470.2L1220.1 468.4" stroke="#9e9e9e" stroke-width="1.35"/>
<path d="M1125.3 487.5L1179.9 470.2" stroke="#9e9e9e" stroke-width="1.35"/>
<ellipse cx="1179.9" cy="470.2" rx="3.7" ry="1.9" fill="#7b7bfa"/>
<g shape-rendering="crispEdges"><g style="isolation:isolate"><polygon points="567,624.4 609.8,710.5 629.3,553" fill="rgb(0,0,0)"/><polygon points="567,624.4 609.8,710.5 629.3,553" fill="url(#q9)" style="mix-blend-mode:screen"/><polygon points="567,624.4 609.8,710.5 629.3,553" fill="url(#q10)" style="mix-blend-mode:screen"/></g></g>
<path d="M567.4 624.4L609.8 710.2" stroke="#9e9e9e" stroke-width="1.35"/>
<ellipse cx="609.8" cy="710.2" rx="3.7" ry="1.9" fill="#7b7bfa"/>
<g shape-rendering="crispEdges"><g style="isolation:isolate"><polygon points="664.8,590.7 700.9,624.1 728.2,541.3" fill="rgb(0,0,0)"/><polygon points="664.8,590.7 700.9,624.1 728.2,541.3" fill="url(#q67)" style="mix-blend-mode:screen"/><polygon points="664.8,590.7 700.9,624.1 728.2,541.3" fill="url(#q68)" style="mix-blend-mode:screen"/></g></g>
<path d="M665.1 590.6L700.9 623.8" stroke="#9e9e9e" stroke-width="1.35"/>
<path d="M665.1 590.6L728 541.6" stroke="#9e9e9e" stroke-width="1.35"/>
<ellipse cx="665.1" cy="590.6" rx="3.8" ry="1.9" fill="#7b7bfa"/>
<ellipse cx="728" cy="541.6" rx="3.7" ry="1.9" fill="#7b7bfa"/>
<g shape-rendering="crispEdges"><g style="isolation:isolate"><polygon points="930.6,540.6 991.4,513.3 954.3,511.9" fill="rgb(0,0,0)"/><polygon points="930.6,540.6 991.4,513.3 954.3,511.9" fill="url(#q150)" style="mix-blend-mode:screen"/><polygon points="930.6,540.6 991.4,513.3 954.3,511.9" fill="url(#q151)" style="mix-blend-mode:screen"/></g></g>
<path d="M954.5 512.2L991 513.4" stroke="#9e9e9e" stroke-width="1.35"/>
<g shape-rendering="crispEdges"><g style="isolation:isolate"><polygon points="567.2,624.7 629.5,553.3 593.4,516.7" fill="rgb(0,0,0)"/><polygon points="567.2,624.7 629.5,553.3 593.4,516.7" fill="url(#q7)" style="mix-blend-mode:screen"/><polygon points="567.2,624.7 629.5,553.3 593.4,516.7" fill="url(#q8)" style="mix-blend-mode:screen"/></g></g>
<path d="M593.4 517L629.2 553.4" stroke="#9e9e9e" stroke-width="1.35"/>
<path d="M567.4 624.4L629.2 553.4" stroke="#9e9e9e" stroke-width="1.35"/>
<ellipse cx="629.2" cy="553.4" rx="3.8" ry="1.9" fill="#7b7bfa"/>
<g shape-rendering="crispEdges"><g style="isolation:isolate"><polygon points="527.4,562.9 593.7,516.9 579.2,501.5" fill="rgb(0,0,0)"/><polygon points="527.4,562.9 593.7,516.9 579.2,501.5" fill="url(#q3)" style="mix-blend-mode:screen"/><polygon points="527.4,562.9 593.7,516.9 579.2,501.5" fill="url(#q4)" style="mix-blend-mode:screen"/></g></g>
<path d="M579.1 501.8L593.4 517" stroke="#9e9e9e" stroke-width="1.35"/>
<g shape-rendering="crispEdges"><g style="isolation:isolate"><polygon points="894.2,539.2 931.1,540.8 954.8,512" fill="rgb(0,0,0)"/><polygon points="894.2,539.2 931.1,540.8 954.8,512" fill="url(#q148)" style="mix-blend-mode:screen"/><polygon points="894.2,539.2 931.1,540.8 954.8,512" fill="url(#q149)" style="mix-blend-mode:screen"/></g></g>
<path d="M894.5 539.1L954.5 512.2" stroke="#9e9e9e" stroke-width="1.35"/>
<ellipse cx="954.5" cy="512.2" rx="3.7" ry="1.9" fill="#7b7bfa"/>
<g shape-rendering="crispEdges"><g style="isolation:isolate"><polygon points="719.7,854.4 750.9,836.9 770.5,652.8" fill="url(#q31)"/><polygon points="719.7,854.4 750.9,836.9 770.5,652.8" fill="url(#q32)" style="mix-blend-mode:screen"/><polygon points="719.7,854.4 750.9,836.9 770.5,652.8" fill="url(#q33)" style="mix-blend-mode:screen"/></g></g>
<path d="M719.8 854L750.9 836.6" stroke="#9e9e9e" stroke-width="1.35"/>
<g shape-rendering="crispEdges"><g style="isolation:isolate"><polygon points="527.3,562.6 567.4,624.8 593.6,516.7" fill="rgb(0,0,0)"/><polygon points="527.3,562.6 567.4,624.8 593.6,516.7" fill="url(#q5)" style="mix-blend-mode:screen"/><polygon points="527.3,562.6 567.4,624.8 593.6,516.7" fill="url(#q6)" style="mix-blend-mode:screen"/></g></g>
<path d="M527.7 562.6L567.4 624.4" stroke="#9e9e9e" stroke-width="1.35"/>
<path d="M527.7 562.6L593.4 517" stroke="#9e9e9e" stroke-width="1.35"/>
<ellipse cx="567.4" cy="624.4" rx="3.8" ry="1.9" fill="#7b7bfa"/>
<ellipse cx="593.4" cy="517" rx="3.7" ry="1.9" fill="#7b7bfa"/>
<g shape-rendering="crispEdges"><g style="isolation:isolate"><polygon points="700.5,623.9 735.9,645.4 762.7,560.9" fill="url(#q70)"/><polygon points="700.5,623.9 735.9,645.4 762.7,560.9" fill="url(#q71)" style="mix-blend-mode:screen"/><polygon points="700.5,623.9 735.9,645.4 762.7,560.9" fill="url(#q72)" style="mix-blend-mode:screen"/></g></g>
<path d="M700.9 623.8L735.8 645.1" stroke="#9e9e9e" stroke-width="1.35"/>
<path d="M700.9 623.8L762.5 561.2" stroke="#9e9e9e" stroke-width="1.35"/>
<ellipse cx="700.9" cy="623.8" rx="3.8" ry="1.9" fill="#7b7bfa"/>
<g shape-rendering="crispEdges"><g style="isolation:isolate"><polygon points="1067.6,506.8 1125.6,487.5 1048.2,490.6" fill="url(#q185)"/><polygon points="1067.6,506.8 1125.6,487.5 1048.2,490.6" fill="url(#q186)" style="mix-blend-mode:screen"/></g></g>
<path d="M1048.5 490.7L1125.3 487.5" stroke="#9e9e9e" stroke-width="1.35"/>
<g shape-rendering="crispEdges"><g style="isolation:isolate"><polygon points="832.3,580.6 894.8,539 859,535.1" fill="rgb(0,0,0)"/><polygon points="832.3,580.6 894.8,539 859,535.1" fill="url(#q117)" style="mix-blend-mode:screen"/><polygon points="832.3,580.6 894.8,539 859,535.1" fill="rgb(0,0,255)" style="mix-blend-mode:screen"/></g></g>
<path d="M859.1 535.4L894.5 539.1" stroke="#9e9e9e" stroke-width="1.35"/>
<g shape-rendering="crispEdges"><g style="isolation:isolate"><polygon points="735.7,645.4 797.5,571.8 762.5,560.9" fill="url(#q73)"/><polygon points="735.7,645.4 797.5,571.8 762.5,560.9" fill="url(#q74)" style="mix-blend-mode:screen"/><polygon points="735.7,645.4 797.5,571.8 762.5,560.9" fill="url(#q75)" style="mix-blend-mode:screen"/></g></g>
<path d="M762.5 561.2L797.2 572" stroke="#9e9e9e" stroke-width="1.35"/>
<ellipse cx="762.5" cy="561.2" rx="3.7" ry="1.9" fill="#7b7bfa"/>
<g shape-rendering="crispEdges"><g style="isolation:isolate"><polygon points="719.8,854.4 770.6,652.8 735.8,644.7" fill="url(#q28)"/><polygon points="719.8,854.4 770.6,652.8 735.8,644.7" fill="url(#q29)" style="mix-blend-mode:screen"/><polygon points="719.8,854.4 770.6,652.8 735.8,644.7" fill="url(#q30)" style="mix-blend-mode:screen"/></g></g>
<path d="M719.8 854L770.5 653.1" stroke="#9e9e9e" stroke-width="1.35"/>
<ellipse cx="719.8" cy="854" rx="3.7" ry="1.9" fill="#7b7bfa"/>
<g shape-rendering="crispEdges"><g style="isolation:isolate"><polygon points="796.8,572.1 832.6,580.7 859.3,535.2" fill="rgb(0,0,0)"/><polygon points="796.8,572.1 832.6,580.7 859.3,535.2" fill="url(#q116)" style="mix-blend-mode:screen"/><polygon points="796.8,572.1 832.6,580.7 859.3,535.2" fill="rgb(0,0,254)" style="mix-blend-mode:screen"/></g></g>
<path d="M797.2 572L859.1 535.4" stroke="#9e9e9e" stroke-width="1.35"/>
<ellipse cx="859.1" cy="535.4" rx="3.7" ry="1.9" fill="#7b7bfa"/>
<g shape-rendering="crispEdges"><g style="isolation:isolate"><polygon points="1028.5,508.5 1068.2,506.7 1048.5,490.3" fill="rgb(0,0,0)"/><polygon points="1028.5,508.5 1068.2,506.7 1048.5,490.3" fill="url(#q184)" style="mix-blend-mode:screen"/></g></g>
<ellipse cx="1048.5" cy="490.7" rx="3.7" ry="1.9" fill="#7b7bfa"/>
<g shape-rendering="crispEdges"><g style="isolation:isolate"><polygon points="509.6,527 527.5,563 579.3,501.6" fill="rgb(0,0,0)"/><polygon points="509.6,527 527.5,563 579.3,501.6" fill="url(#q1)" style="mix-blend-mode:screen"/><polygon points="509.6,527 527.5,563 579.3,501.6" fill="url(#q2)" style="mix-blend-mode:screen"/></g></g>
<path d="M509.9 527.1L527.7 562.6" stroke="#9e9e9e" stroke-width="1.35"/>
<path d="M509.9 527.1L579.1 501.8" stroke="#9e9e9e" stroke-width="1.35"/>
<ellipse cx="509.9" cy="527.1" rx="3.8" ry="2" fill="#7b7bfa"/>
<ellipse cx="527.7" cy="562.6" rx="3.8" ry="2" fill="#7b7bfa"/>
<ellipse cx="579.1" cy="501.8" rx="3.7" ry="1.9" fill="#7b7bfa"/>
<g shape-rendering="crispEdges"><g style="isolation:isolate"><polygon points="1125,487.6 1207.7,482 1220.4,468.3" fill="url(#q225)"/><polygon points="1125,487.6 1207.7,482 1220.4,468.3" fill="rgb(0,0,255)" style="mix-blend-mode:screen"/></g></g>
<g shape-rendering="crispEdges"><g style="isolation:isolate"><polygon points="735.5,645.3 770.5,653.5 797.3,571.7" fill="url(#q76)"/><polygon points="735.5,645.3 770.5,653.5 797.3,571.7" fill="url(#q77)" style="mix-blend-mode:screen"/><polygon points="735.5,645.3 770.5,653.5 797.3,571.7" fill="url(#q78)" style="mix-blend-mode:screen"/></g></g>
<path d="M735.8 645.1L770.5 653.1" stroke="#9e9e9e" stroke-width="1.35"/>
<path d="M735.8 645.1L797.2 572" stroke="#9e9e9e" stroke-width="1.35"/>
<ellipse cx="735.8" cy="645.1" rx="3.8" ry="2" fill="#7b7bfa"/>
<g shape-rendering="crispEdges"><g style="isolation:isolate"><polygon points="968.2,538 1029.2,508.3 990.8,513.1" fill="rgb(0,0,0)"/><polygon points="968.2,538 1029.2,508.3 990.8,513.1" fill="url(#q154)" style="mix-blend-mode:screen"/></g></g>
<path d="M991 513.4L1028.9 508.4" stroke="#9e9e9e" stroke-width="1.35"/>
<g shape-rendering="crispEdges"><g style="isolation:isolate"><polygon points="930.6,540.5 968.7,538.1 991.3,513.2" fill="rgb(0,0,0)"/><polygon points="930.6,540.5 968.7,538.1 991.3,513.2" fill="url(#q152)" style="mix-blend-mode:screen"/><polygon points="930.6,540.5 968.7,538.1 991.3,513.2" fill="url(#q153)" style="mix-blend-mode:screen"/></g></g>
<path d="M930.9 540.4L991 513.4" stroke="#9e9e9e" stroke-width="1.35"/>
<ellipse cx="991" cy="513.4" rx="3.8" ry="1.9" fill="#7b7bfa"/>
<g shape-rendering="crispEdges"><g style="isolation:isolate"><polygon points="770.3,653.4 832.8,580.2 797.1,571.7" fill="url(#q79)"/><polygon points="770.3,653.4 832.8,580.2 797.1,571.7" fill="url(#q80)" style="mix-blend-mode:screen"/><polygon points="770.3,653.4 832.8,580.2 797.1,571.7" fill="url(#q81)" style="mix-blend-mode:screen"/></g></g>
<path d="M797.2 572L832.5 580.4" stroke="#9e9e9e" stroke-width="1.35"/>
<ellipse cx="797.2" cy="572" rx="3.8" ry="1.9" fill="#7b7bfa"/>
<g shape-rendering="crispEdges"><g style="isolation:isolate"><polygon points="868.1,575.9 931.3,540.3 894.4,538.8" fill="rgb(0,0,0)"/><polygon points="868.1,575.9 931.3,540.3 894.4,538.8" fill="url(#q119)" style="mix-blend-mode:screen"/><polygon points="868.1,575.9 931.3,540.3 894.4,538.8" fill="rgb(0,0,255)" style="mix-blend-mode:screen"/></g></g>
<path d="M894.5 539.1L930.9 540.4" stroke="#9e9e9e" stroke-width="1.35"/>
<g shape-rendering="crispEdges"><g style="isolation:isolate"><polygon points="832.2,580.5 868.5,576 894.8,538.9" fill="rgb(0,0,0)"/><polygon points="832.2,580.5 868.5,576 894.8,538.9" fill="url(#q118)" style="mix-blend-mode:screen"/><polygon points="832.2,580.5 868.5,576 894.8,538.9" fill="rgb(0,0,254)" style="mix-blend-mode:screen"/></g></g>
<path d="M832.5 580.4L894.5 539.1" stroke="#9e9e9e" stroke-width="1.35"/>
<ellipse cx="894.5" cy="539.1" rx="3.8" ry="1.9" fill="#7b7bfa"/>
<g shape-rendering="crispEdges"><g style="isolation:isolate"><polygon points="750.8,836.9 805.7,652.5 770.4,652.8" fill="url(#q34)"/><polygon points="750.8,836.9 805.7,652.5 770.4,652.8" fill="url(#q35)" style="mix-blend-mode:screen"/><polygon points="750.8,836.9 805.7,652.5 770.4,652.8" fill="url(#q36)" style="mix-blend-mode:screen"/></g></g>
<g shape-rendering="crispEdges"><g style="isolation:isolate"><polygon points="750.7,836.9 784,826.2 805.7,652.5" fill="url(#q37)"/><polygon points="750.7,836.9 784,826.2 805.7,652.5" fill="url(#q38)" style="mix-blend-mode:screen"/><polygon points="750.7,836.9 784,826.2 805.7,652.5" fill="url(#q39)" style="mix-blend-mode:screen"/></g></g>
<path d="M750.9 836.6L784 825.8" stroke="#9e9e9e" stroke-width="1.35"/>
<path d="M750.9 836.6L805.6 652.8" stroke="#9e9e9e" stroke-width="1.35"/>
<ellipse cx="750.9" cy="836.6" rx="3.8" ry="1.9" fill="#7b7bfa"/>
<g shape-rendering="crispEdges"><g style="isolation:isolate"><polygon points="1067.6,506.7 1108.7,502.4 1125.6,487.4" fill="url(#q187)"/><polygon points="1067.6,506.7 1108.7,502.4 1125.6,487.4" fill="url(#q188)" style="mix-blend-mode:screen"/></g></g>
<path d="M1067.9 506.6L1125.3 487.5" stroke="#9e9e9e" stroke-width="1.35"/>
<g shape-rendering="crispEdges"><g style="isolation:isolate"><polygon points="770.2,653.3 805.6,653.2 832.7,580.1" fill="url(#q82)"/><polygon points="770.2,653.3 805.6,653.2 832.7,580.1" fill="url(#q83)" style="mix-blend-mode:screen"/><polygon points="770.2,653.3 805.6,653.2 832.7,580.1" fill="url(#q84)" style="mix-blend-mode:screen"/></g></g>
<path d="M770.5 653.1L805.6 652.8" stroke="#9e9e9e" stroke-width="1.35"/>
<path d="M770.5 653.1L832.5 580.4" stroke="#9e9e9e" stroke-width="1.35"/>
<ellipse cx="770.5" cy="653.1" rx="3.9" ry="2" fill="#7b7bfa"/>
<g shape-rendering="crispEdges"><g style="isolation:isolate"><polygon points="1108,502.3 1125,487.5 1207.7,481.9" fill="url(#q189)"/><polygon points="1108,502.3 1125,487.5 1207.7,481.9" fill="rgb(0,0,255)" style="mix-blend-mode:screen"/></g></g>
<path d="M1125.3 487.5L1207.3 482" stroke="#9e9e9e" stroke-width="1.35"/>
<ellipse cx="1125.3" cy="487.5" rx="3.8" ry="1.9" fill="#7b7bfa"/>
<g shape-rendering="crispEdges"><g style="isolation:isolate"><polygon points="805.4,653.1 868.7,575.5 832.5,580" fill="url(#q85)"/><polygon points="805.4,653.1 868.7,575.5 832.5,580" fill="url(#q86)" style="mix-blend-mode:screen"/><polygon points="805.4,653.1 868.7,575.5 832.5,580" fill="url(#q87)" style="mix-blend-mode:screen"/></g></g>
<path d="M832.5 580.4L868.4 575.7" stroke="#9e9e9e" stroke-width="1.35"/>
<ellipse cx="832.5" cy="580.4" rx="3.8" ry="2" fill="#7b7bfa"/>
<g shape-rendering="crispEdges"><g style="isolation:isolate"><polygon points="1007.2,528.3 1068.2,506.5 1028.6,508.1" fill="rgb(0,0,0)"/><polygon points="1007.2,528.3 1068.2,506.5 1028.6,508.1" fill="url(#q156)" style="mix-blend-mode:screen"/></g></g>
<path d="M1028.9 508.4L1067.9 506.6" stroke="#9e9e9e" stroke-width="1.35"/>
<g shape-rendering="crispEdges"><g style="isolation:isolate"><polygon points="968.2,537.9 1007.9,528.4 1029.2,508.2" fill="rgb(0,0,0)"/><polygon points="968.2,537.9 1007.9,528.4 1029.2,508.2" fill="url(#q155)" style="mix-blend-mode:screen"/></g></g>
<path d="M968.5 537.8L1028.9 508.4" stroke="#9e9e9e" stroke-width="1.35"/>
<ellipse cx="1028.9" cy="508.4" rx="3.8" ry="2" fill="#7b7bfa"/>
<g shape-rendering="crispEdges"><g style="isolation:isolate"><polygon points="1207,482 1294.7,481.9 1219.8,468.2" fill="url(#q226)"/><polygon points="1207,482 1294.7,481.9 1219.8,468.2" fill="rgb(0,0,255)" style="mix-blend-mode:screen"/></g></g>
<g shape-rendering="crispEdges"><g style="isolation:isolate"><polygon points="905.3,571.6 968.8,537.7 930.8,540.1" fill="rgb(0,0,0)"/><polygon points="905.3,571.6 968.8,537.7 930.8,540.1" fill="url(#q121)" style="mix-blend-mode:screen"/><polygon points="905.3,571.6 968.8,537.7 930.8,540.1" fill="url(#q122)" style="mix-blend-mode:screen"/></g></g>
<path d="M930.9 540.4L968.5 537.8" stroke="#9e9e9e" stroke-width="1.35"/>
<g shape-rendering="crispEdges"><g style="isolation:isolate"><polygon points="868.1,575.8 905.7,571.8 931.2,540.2" fill="rgb(0,0,0)"/><polygon points="868.1,575.8 905.7,571.8 931.2,540.2" fill="url(#q120)" style="mix-blend-mode:screen"/><polygon points="868.1,575.8 905.7,571.8 931.2,540.2" fill="rgb(0,0,255)" style="mix-blend-mode:screen"/></g></g>
<path d="M868.4 575.7L930.9 540.4" stroke="#9e9e9e" stroke-width="1.35"/>
<ellipse cx="930.9" cy="540.4" rx="3.8" ry="2" fill="#7b7bfa"/>
<g shape-rendering="crispEdges"><g style="isolation:isolate"><polygon points="783.8,826.1 820,840.2 841.8,647.8" fill="url(#q43)"/><polygon points="783.8,826.1 820,840.2 841.8,647.8" fill="url(#q44)" style="mix-blend-mode:screen"/><polygon points="783.8,826.1 820,840.2 841.8,647.8" fill="url(#q45)" style="mix-blend-mode:screen"/></g></g>
<path d="M784 825.8L819.9 839.9" stroke="#9e9e9e" stroke-width="1.35"/>
<g shape-rendering="crispEdges"><g style="isolation:isolate"><polygon points="783.9,826.2 841.9,647.9 805.6,652.5" fill="url(#q40)"/><polygon points="783.9,826.2 841.9,647.9 805.6,652.5" fill="url(#q41)" style="mix-blend-mode:screen"/><polygon points="783.9,826.2 841.9,647.9 805.6,652.5" fill="url(#q42)" style="mix-blend-mode:screen"/></g></g>
<path d="M784 825.8L841.7 648.2" stroke="#9e9e9e" stroke-width="1.35"/>
<ellipse cx="784" cy="825.8" rx="3.9" ry="2" fill="#7b7bfa"/>
<g shape-rendering="crispEdges"><g style="isolation:isolate"><polygon points="805.3,653.1 841.8,648.5 868.6,575.4" fill="url(#q88)"/><polygon points="805.3,653.1 841.8,648.5 868.6,575.4" fill="url(#q89)" style="mix-blend-mode:screen"/><polygon points="805.3,653.1 841.8,648.5 868.6,575.4" fill="url(#q90)" style="mix-blend-mode:screen"/></g></g>
<path d="M805.6 652.8L841.7 648.2" stroke="#9e9e9e" stroke-width="1.35"/>
<path d="M805.6 652.8L868.4 575.7" stroke="#9e9e9e" stroke-width="1.35"/>
<ellipse cx="805.6" cy="652.8" rx="3.9" ry="2" fill="#7b7bfa"/>
<g shape-rendering="crispEdges"><g style="isolation:isolate"><polygon points="1047.6,526.5 1108.7,502.1 1067.6,506.4" fill="url(#q158)"/><polygon points="1047.6,526.5 1108.7,502.1 1067.6,506.4" fill="url(#q159)" style="mix-blend-mode:screen"/></g></g>
<path d="M1067.9 506.6L1108.4 502.2" stroke="#9e9e9e" stroke-width="1.35"/>
<path d="M1047.9 526.3L1108.4 502.2" stroke="#9e9e9e" stroke-width="1.35"/>
<g shape-rendering="crispEdges"><g style="isolation:isolate"><polygon points="841.5,648.5 905.9,571.2 868.3,575.3" fill="rgb(0,0,0)"/><polygon points="841.5,648.5 905.9,571.2 868.3,575.3" fill="url(#q91)" style="mix-blend-mode:screen"/><polygon points="841.5,648.5 905.9,571.2 868.3,575.3" fill="url(#q92)" style="mix-blend-mode:screen"/></g></g>
<path d="M868.4 575.7L905.6 571.4" stroke="#9e9e9e" stroke-width="1.35"/>
<ellipse cx="868.4" cy="575.7" rx="3.9" ry="2" fill="#7b7bfa"/>
<g shape-rendering="crispEdges"><g style="isolation:isolate"><polygon points="1007.2,528.3 1048.1,526.6 1068.2,506.4" fill="rgb(0,0,0)"/><polygon points="1007.2,528.3 1048.1,526.6 1068.2,506.4" fill="url(#q157)" style="mix-blend-mode:screen"/></g></g>
<path d="M1007.6 528.2L1067.9 506.6" stroke="#9e9e9e" stroke-width="1.35"/>
<ellipse cx="1067.9" cy="506.6" rx="3.9" ry="2" fill="#7b7bfa"/>
<g shape-rendering="crispEdges"><g style="isolation:isolate"><polygon points="1108,502.3 1207.5,481.7 1294.7,481.9" fill="url(#q190)"/><polygon points="1108,502.3 1207.5,481.7 1294.7,481.9" fill="rgb(0,0,255)" style="mix-blend-mode:screen"/></g></g>
<path d="M1207.3 482L1294.3 481.9" stroke="#9e9e9e" stroke-width="1.35"/>
<ellipse cx="1207.3" cy="482" rx="3.9" ry="2" fill="#7b7bfa"/>
<g shape-rendering="crispEdges"><g style="isolation:isolate"><polygon points="943.9,565 1007.9,528 968.3,537.5" fill="rgb(0,0,0)"/><polygon points="943.9,565 1007.9,528 968.3,537.5" fill="url(#q125)" style="mix-blend-mode:screen"/><polygon points="943.9,565 1007.9,528 968.3,537.5" fill="url(#q126)" style="mix-blend-mode:screen"/></g></g>
<path d="M968.5 537.8L1007.6 528.2" stroke="#9e9e9e" stroke-width="1.35"/>
<g shape-rendering="crispEdges"><g style="isolation:isolate"><polygon points="905.3,571.6 944.4,565.1 968.8,537.6" fill="rgb(0,0,0)"/><polygon points="905.3,571.6 944.4,565.1 968.8,537.6" fill="url(#q123)" style="mix-blend-mode:screen"/><polygon points="905.3,571.6 944.4,565.1 968.8,537.6" fill="url(#q124)" style="mix-blend-mode:screen"/></g></g>
<path d="M905.6 571.4L968.5 537.8" stroke="#9e9e9e" stroke-width="1.35"/>
<ellipse cx="968.5" cy="537.8" rx="3.9" ry="2" fill="#7b7bfa"/>
<g shape-rendering="crispEdges"><g style="isolation:isolate"><polygon points="1294,482 1386.8,486.8 1219.7,468.3" fill="url(#q227)"/><polygon points="1294,482 1386.8,486.8 1219.7,468.3" fill="url(#q228)" style="mix-blend-mode:screen"/><polygon points="1294,482 1386.8,486.8 1219.7,468.3" fill="url(#q229)" style="mix-blend-mode:screen"/></g></g>
<path d="M1386.4 486.8L1220.1 468.4" stroke="url(#q285)" stroke-width="1.1"/>
<ellipse cx="1220.1" cy="468.4" rx="3.8" ry="1.9" fill="#7b7bfa"/>
<g shape-rendering="crispEdges"><g style="isolation:isolate"><polygon points="819.8,840.2 856.6,848 879,630" fill="url(#q49)"/><polygon points="819.8,840.2 856.6,848 879,630" fill="url(#q50)" style="mix-blend-mode:screen"/><polygon points="819.8,840.2 856.6,848 879,630" fill="url(#q51)" style="mix-blend-mode:screen"/></g></g>
<path d="M819.9 839.9L856.5 847.7" stroke="#9e9e9e" stroke-width="1.35"/>
<g shape-rendering="crispEdges"><g style="isolation:isolate"><polygon points="819.9,840.2 879.1,630 841.7,647.8" fill="url(#q46)"/><polygon points="819.9,840.2 879.1,630 841.7,647.8" fill="url(#q47)" style="mix-blend-mode:screen"/><polygon points="819.9,840.2 879.1,630 841.7,647.8" fill="url(#q48)" style="mix-blend-mode:screen"/></g></g>
<path d="M819.9 839.9L878.9 630.3" stroke="#9e9e9e" stroke-width="1.35"/>
<ellipse cx="819.9" cy="839.9" rx="3.9" ry="2" fill="#7b7bfa"/>
<g shape-rendering="crispEdges"><g style="isolation:isolate"><polygon points="841.5,648.4 879,630.7 905.8,571.2" fill="rgb(0,0,0)"/><polygon points="841.5,648.4 879,630.7 905.8,571.2" fill="url(#q93)" style="mix-blend-mode:screen"/><polygon points="841.5,648.4 879,630.7 905.8,571.2" fill="url(#q94)" style="mix-blend-mode:screen"/></g></g>
<path d="M841.7 648.2L878.9 630.3" stroke="#9e9e9e" stroke-width="1.35"/>
<path d="M841.7 648.2L905.6 571.4" stroke="#9e9e9e" stroke-width="1.35"/>
<ellipse cx="841.7" cy="648.2" rx="3.9" ry="2" fill="#7b7bfa"/>
<g shape-rendering="crispEdges"><g style="isolation:isolate"><polygon points="878.7,630.6 944.5,564.6 905.5,571.1" fill="rgb(0,0,0)"/><polygon points="878.7,630.6 944.5,564.6 905.5,571.1" fill="url(#q95)" style="mix-blend-mode:screen"/><polygon points="878.7,630.6 944.5,564.6 905.5,571.1" fill="url(#q96)" style="mix-blend-mode:screen"/></g></g>
<path d="M905.6 571.4L944.2 564.8" stroke="#9e9e9e" stroke-width="1.35"/>
<ellipse cx="905.6" cy="571.4" rx="3.9" ry="2" fill="#7b7bfa"/>
<g shape-rendering="crispEdges"><g style="isolation:isolate"><polygon points="984,561.7 1048.2,526.2 1007.4,527.9" fill="rgb(0,0,0)"/><polygon points="984,561.7 1048.2,526.2 1007.4,527.9" fill="url(#q129)" style="mix-blend-mode:screen"/></g></g>
<path d="M1007.6 528.2L1047.9 526.3" stroke="#9e9e9e" stroke-width="1.35"/>
<path d="M984.2 561.5L1047.9 526.3" stroke="#9e9e9e" stroke-width="1.35"/>
<ellipse cx="1047.9" cy="526.3" rx="3.9" ry="2" fill="#7b7bfa"/>
<g shape-rendering="crispEdges"><g style="isolation:isolate"><polygon points="1108,502.3 1294.7,481.8 1386.8,486.8" fill="url(#q191)"/><polygon points="1108,502.3 1294.7,481.8 1386.8,486.8" fill="url(#q192)" style="mix-blend-mode:screen"/><polygon points="1108,502.3 1294.7,481.8 1386.8,486.8" fill="url(#q193)" style="mix-blend-mode:screen"/></g></g>
<path d="M1108.4 502.2L1386.4 486.8" stroke="url(#q283)" stroke-width="1.1"/>
<path d="M1294.3 481.9L1386.4 486.8" stroke="#9e9e9e" stroke-width="1.35"/>
<ellipse cx="1108.4" cy="502.2" rx="3.9" ry="2" fill="#7b7bfa"/>
<ellipse cx="1294.3" cy="481.9" rx="3.9" ry="2" fill="#7b7bfa"/>
<ellipse cx="1386.4" cy="486.8" rx="3.9" ry="2" fill="#7b7bfa"/>
<g shape-rendering="crispEdges"><g style="isolation:isolate"><polygon points="943.8,565 984.4,561.8 1007.8,528" fill="rgb(0,0,0)"/><polygon points="943.8,565 984.4,561.8 1007.8,528" fill="url(#q127)" style="mix-blend-mode:screen"/><polygon points="943.8,565 984.4,561.8 1007.8,528" fill="url(#q128)" style="mix-blend-mode:screen"/></g></g>
<path d="M944.2 564.8L1007.6 528.2" stroke="#9e9e9e" stroke-width="1.35"/>
<ellipse cx="1007.6" cy="528.2" rx="3.9" ry="2" fill="#7b7bfa"/>
<g shape-rendering="crispEdges"><g style="isolation:isolate"><polygon points="856.5,848 918.4,629.9 878.9,630" fill="url(#q52)"/><polygon points="856.5,848 918.4,629.9 878.9,630" fill="url(#q53)" style="mix-blend-mode:screen"/><polygon points="856.5,848 918.4,629.9 878.9,630" fill="url(#q54)" style="mix-blend-mode:screen"/></g></g>
<path d="M856.5 847.7L918.2 630.3" stroke="#9e9e9e" stroke-width="1.35"/>
<ellipse cx="856.5" cy="847.7" rx="3.9" ry="2" fill="#7b7bfa"/>
<g shape-rendering="crispEdges"><g style="isolation:isolate"><polygon points="878.6,630.5 918.3,630.6 944.4,564.6" fill="rgb(0,0,0)"/><polygon points="878.6,630.5 918.3,630.6 944.4,564.6" fill="url(#q97)" style="mix-blend-mode:screen"/><polygon points="878.6,630.5 918.3,630.6 944.4,564.6" fill="url(#q98)" style="mix-blend-mode:screen"/></g></g>
<path d="M878.9 630.3L918.2 630.3" stroke="#9e9e9e" stroke-width="1.35"/>
<path d="M878.9 630.3L944.2 564.8" stroke="#9e9e9e" stroke-width="1.35"/>
<ellipse cx="878.9" cy="630.3" rx="3.9" ry="2" fill="#7b7bfa"/>
<g shape-rendering="crispEdges"><g style="isolation:isolate"><polygon points="918,630.5 984.5,561.3 944.1,564.5" fill="rgb(0,0,0)"/><polygon points="918,630.5 984.5,561.3 944.1,564.5" fill="url(#q99)" style="mix-blend-mode:screen"/><polygon points="918,630.5 984.5,561.3 944.1,564.5" fill="url(#q100)" style="mix-blend-mode:screen"/></g></g>
<path d="M944.2 564.8L984.2 561.5" stroke="#9e9e9e" stroke-width="1.35"/>
<path d="M918.2 630.3L984.2 561.5" stroke="#9e9e9e" stroke-width="1.35"/>
<ellipse cx="918.2" cy="630.3" rx="3.9" ry="2" fill="#7b7bfa"/>
<ellipse cx="944.2" cy="564.8" rx="3.9" ry="2" fill="#7b7bfa"/>
<ellipse cx="984.2" cy="561.5" rx="3.9" ry="2" fill="#7b7bfa"/>
</g>
<text x="236.1" y="392.9" text-anchor="end" font-family="Liberation Sans" font-size="12" fill="#ffffff">-0.00</text>
<text x="254.9" y="469.6" text-anchor="end" font-family="Liberation Sans" font-size="12" fill="#ffffff">-0.05</text>
<text x="272.7" y="542.4" text-anchor="end" font-family="Liberation Sans" font-size="12" fill="#ffffff">-0.10</text>
<text x="289.6" y="611.6" text-anchor="end" font-family="Liberation Sans" font-size="12" fill="#ffffff">-0.15</text>
<text x="305.6" y="677.3" text-anchor="end" font-family="Liberation Sans" font-size="12" fill="#ffffff">-0.20</text>
<text x="320.9" y="739.8" text-anchor="end" font-family="Liberation Sans" font-size="12" fill="#ffffff">-0.25</text>
<text x="310.3" y="810.8" font-family="Liberation Sans" font-size="12" fill="#ffffff">135</text>
<text x="361.7" y="825.8" font-family="Liberation Sans" font-size="12" fill="#ffffff">140</text>
<text x="414.7" y="841.7" font-family="Liberation Sans" font-size="12" fill="#ffffff">145</text>
<text x="459.2" y="855.8" font-family="Liberation Sans" font-size="12" fill="#ffffff">149</text>
<text x="491.7" y="867.5" font-family="Liberation Sans" font-size="12" fill="#ffffff">152.5</text>
<text x="551.7" y="885.8" font-family="Liberation Sans" font-size="12" fill="#ffffff">157.5</text>
<text x="590.8" y="894.7" font-family="Liberation Sans" font-size="12" fill="#ffffff">160</text>
<text x="655.5" y="915.2" font-family="Liberation Sans" font-size="12" fill="#ffffff">165</text>
<text x="724.8" y="935.9" font-family="Liberation Sans" font-size="12" fill="#ffffff">170</text>
<text x="796.6" y="957.8" font-family="Liberation Sans" font-size="12" fill="#ffffff">175</text>
<text x="873.6" y="980.8" font-family="Liberation Sans" font-size="12" fill="#ffffff">180</text>
<text x="955.6" y="1005.9" font-family="Liberation Sans" font-size="12" fill="#ffffff">185</text>
<text x="1064" y="979.9" font-family="Liberation Sans" font-size="12" fill="#ffffff">02/09/18</text>
<text x="1124.2" y="956.9" font-family="Liberation Sans" font-size="12" fill="#ffffff">02/16/18</text>
<text x="1182.5" y="935.1" font-family="Liberation Sans" font-size="12" fill="#ffffff">02/23/18</text>
<text x="1236.1" y="914.3" font-family="Liberation Sans" font-size="12" fill="#ffffff">03/02/18</text>
<text x="1287.2" y="894.2" font-family="Liberation Sans" font-size="12" fill="#ffffff">03/09/18</text>
<text x="1334.9" y="874.9" font-family="Liberation Sans" font-size="12" fill="#ffffff">03/16/18</text>
<text x="1381.2" y="857" font-family="Liberation Sans" font-size="12" fill="#ffffff">03/23/18</text>
<text x="1544.2" y="794" font-family="Liberation Sans" font-size="12" fill="#ffffff">04/20/18</text>
<text transform="translate(28,619) rotate(-90)" font-family="Liberation Sans" font-size="12" fill="#ffffff">THETA</text>
<text transform="translate(591,946) rotate(17)" font-family="Liberation Sans" font-size="12" fill="#d8d0d0">STRIKE PRICE</text>
<text transform="translate(1278,969) rotate(-21)" font-family="Liberation Sans" font-size="12" fill="#d8d0d0">EXPIRATION</text>
</svg>
<div id="wb"></div></div></body></html>
